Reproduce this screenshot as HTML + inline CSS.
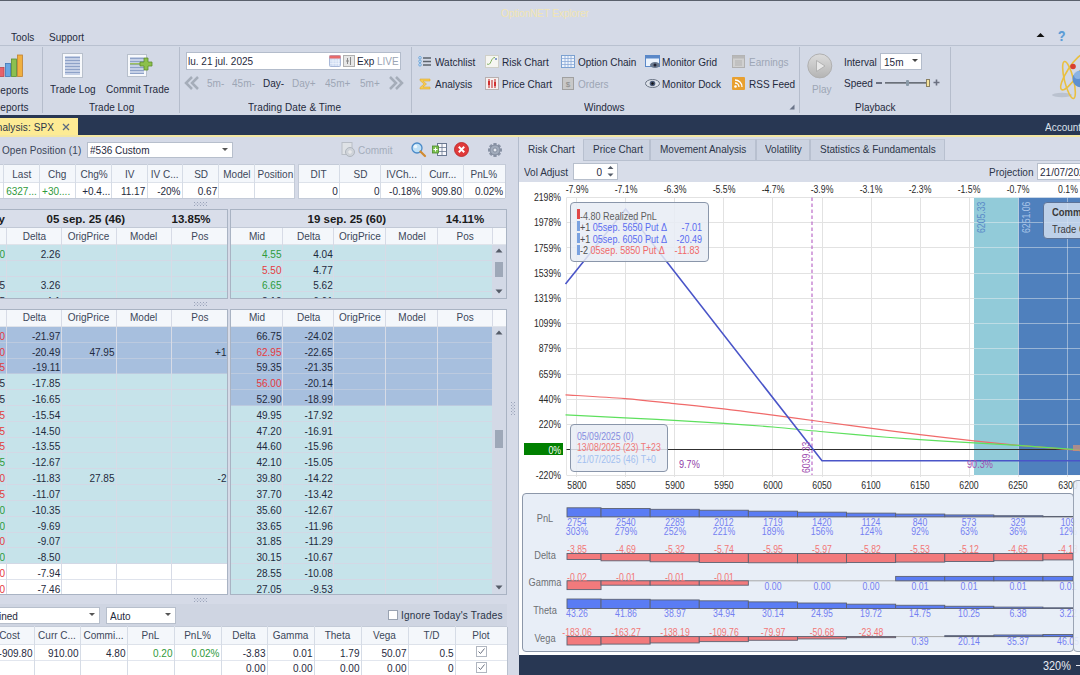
<!DOCTYPE html>
<html><head><meta charset="utf-8">
<style>
*{margin:0;padding:0;box-sizing:border-box}
html,body{width:1080px;height:675px;overflow:hidden;background:#d5dae7;font-family:"Liberation Sans",sans-serif;font-size:11.5px;color:#1f2a3d}
.a{position:absolute}
.t{position:absolute;white-space:nowrap;line-height:12px}
svg{position:absolute;overflow:visible}
</style></head><body>
<div class="a" style="left:0px;top:0px;width:1080px;height:1px;background:#5a606c;"></div>
<div class="t" style="left:501px;top:7.00px;color:#f1e5b2;transform:scaleX(0.87);transform-origin:left;letter-spacing:-0.1px;">OptionNET Explorer</div>
<div class="t" style="left:11px;top:31.00px;transform:scaleX(0.87);transform-origin:left;">Tools</div>
<div class="t" style="left:49px;top:31.00px;transform:scaleX(0.87);transform-origin:left;">Support</div>
<svg style="left:1036px;top:32px" width="9" height="6"><path d="M0.5 5 L4.5 1 L8.5 5 Z" fill="#111"/></svg>
<div class="t" style="left:1058px;top:30.00px;font-size:14px;color:#5b9bd5;font-weight:bold;transform:scaleX(0.87);transform-origin:left;text-shadow:0 0 1px #9cc3ea;">?</div>
<div class="a" style="left:0px;top:45px;width:1080px;height:1px;background:#b9c1d0;"></div>
<div class="a" style="left:0px;top:46px;width:1080px;height:69px;background:#d3d9e6;"></div>
<div class="a" style="left:42px;top:47px;width:1px;height:66px;background:#b5bdcc;"></div>
<div class="a" style="left:179px;top:47px;width:1px;height:66px;background:#b5bdcc;"></div>
<div class="a" style="left:411px;top:47px;width:1px;height:66px;background:#b5bdcc;"></div>
<div class="a" style="left:799px;top:47px;width:1px;height:66px;background:#b5bdcc;"></div>
<div class="a" style="left:950px;top:47px;width:1px;height:66px;background:#b5bdcc;"></div>
<svg style="left:0;top:54px" width="24" height="24"><rect x="-1" y="13.5" width="5" height="9" fill="#e8626a" stroke="#b8484e" stroke-width="0.8"/><rect x="5.5" y="9.5" width="5" height="13" fill="#6aa6e2" stroke="#3f78b8" stroke-width="0.8"/><rect x="11.5" y="5" width="5" height="17.5" fill="#8cc050" stroke="#5c9030" stroke-width="0.8"/><rect x="17.5" y="1" width="5" height="21.5" fill="#f0b040" stroke="#c08030" stroke-width="0.8"/></svg>
<div class="t" style="left:-7.5px;top:83.50px;transform:scaleX(0.87);transform-origin:left;letter-spacing:0.1px;">Reports</div>
<div class="t" style="left:-7px;top:101.00px;transform:scaleX(0.87);transform-origin:left;letter-spacing:0.1px;">Reports</div>
<svg style="left:62px;top:53px" width="21" height="25"><rect x="0.5" y="0.5" width="20" height="24" fill="#f7f9fc" stroke="#b8c0cc"/><rect x="3" y="3" width="15" height="19" fill="#c5d0e6"/><rect x="3" y="4" width="15" height="1" fill="#8ea2c8"/><rect x="3" y="7" width="15" height="1" fill="#8ea2c8"/><rect x="3" y="10" width="15" height="1" fill="#8ea2c8"/><rect x="3" y="13" width="15" height="1" fill="#8ea2c8"/><rect x="3" y="16" width="15" height="1" fill="#8ea2c8"/><rect x="3" y="19" width="15" height="1" fill="#8ea2c8"/></svg>
<svg style="left:127px;top:54px" width="26" height="23"><rect x="0.5" y="0.5" width="19" height="22" fill="#f7f9fc" stroke="#b8c0cc"/><rect x="3" y="3" width="14" height="17" fill="#c5d0e6"/><rect x="3" y="4" width="14" height="1" fill="#8ea2c8"/><rect x="3" y="7" width="14" height="1" fill="#8ea2c8"/><rect x="3" y="10" width="14" height="1" fill="#8ea2c8"/><rect x="3" y="13" width="14" height="1" fill="#8ea2c8"/><rect x="3" y="16" width="14" height="1" fill="#8ea2c8"/><rect x="3" y="19" width="14" height="1" fill="#8ea2c8"/><rect x="3" y="9" width="12" height="1.5" fill="#9cc060"/><path d="M17 4 h4 v4 h4 v4 h-4 v4 h-4 v-4 h-4 v-4 h4 z" fill="#8cc04a" stroke="#5e8e2e" stroke-width="0.8"/></svg>
<div class="t" style="left:50px;top:83.00px;transform:scaleX(0.87);transform-origin:left;letter-spacing:0.05px;">Trade Log</div>
<div class="t" style="left:106px;top:83.00px;transform:scaleX(0.87);transform-origin:left;letter-spacing:0.05px;">Commit Trade</div>
<div class="t" style="left:89px;top:101.00px;transform:scaleX(0.87);transform-origin:left;">Trade Log</div>
<div class="a" style="left:186px;top:52px;width:215px;height:18px;background:#fff;border:1px solid #b3bccb"></div>
<div class="t" style="left:188px;top:55.00px;transform:scaleX(0.87);transform-origin:left;">lu. 21 jul. 2025</div>
<svg style="left:329px;top:55px" width="12" height="12"><rect x="0.5" y="0.5" width="11" height="11" rx="1" fill="#d0ddf2" stroke="#a8b8d8"/><rect x="0.5" y="0.5" width="11" height="3" fill="#e86a6a"/><path d="M1 6h10M1 8.5h10M4 4v7M7 4v7M9.5 4v7" stroke="#f4f8ff" stroke-width="0.6"/></svg>
<svg style="left:343px;top:55px" width="12" height="12"><rect x="0.5" y="0.5" width="11" height="11" fill="#e6e6e6" stroke="#b0b0b0"/><path d="M4.5 3v6M7.5 2v8M3 6h3" stroke="#888" stroke-width="1"/></svg>
<div class="t" style="left:357px;top:55.00px;transform:scaleX(0.87);transform-origin:left;">Exp</div>
<div class="t" style="left:377px;top:55.00px;color:#9aa4b4;transform:scaleX(0.87);transform-origin:left;">LIVE</div>
<svg style="left:185px;top:76px" width="14" height="14"><path d="M7 1 L1 7 L7 13 M13 1 L7 7 L13 13" fill="none" stroke="#a5adb9" stroke-width="2.5"/></svg>
<svg style="left:389px;top:76px" width="14" height="14"><path d="M1 1 L7 7 L1 13 M7 1 L13 7 L7 13" fill="none" stroke="#a5adb9" stroke-width="2.5"/></svg>
<div class="t" style="left:206.5px;top:77.00px;color:#9da6b5;transform:scaleX(0.87);transform-origin:left;">5m-</div>
<div class="t" style="left:231.5px;top:77.00px;color:#9da6b5;transform:scaleX(0.87);transform-origin:left;">45m-</div>
<div class="t" style="left:262.5px;top:77.00px;transform:scaleX(0.87);transform-origin:left;">Day-</div>
<div class="t" style="left:292px;top:77.00px;color:#9da6b5;transform:scaleX(0.87);transform-origin:left;">Day+</div>
<div class="t" style="left:325px;top:77.00px;color:#9da6b5;transform:scaleX(0.87);transform-origin:left;">45m+</div>
<div class="t" style="left:359.5px;top:77.00px;color:#9da6b5;transform:scaleX(0.87);transform-origin:left;">5m+</div>
<div class="t" style="left:248px;top:101.00px;transform:scaleX(0.87);transform-origin:left;letter-spacing:0.1px;">Trading Date &amp; Time</div>
<svg style="left:418px;top:56px" width="14" height="12"><circle cx="2" cy="1.8" r="1.3" fill="#d4e6f8" stroke="#5b9bd5" stroke-width="0.8"/><circle cx="2" cy="5.3" r="1.3" fill="#d4e6f8" stroke="#5b9bd5" stroke-width="0.8"/><circle cx="2" cy="8.8" r="1.3" fill="#d4e6f8" stroke="#5b9bd5" stroke-width="0.8"/><path d="M5 2h8M5 5.5h8M5 9h8" stroke="#5e646e" stroke-width="1.3"/></svg>
<div class="t" style="left:435px;top:55.50px;transform:scaleX(0.87);transform-origin:left;">Watchlist</div>
<svg style="left:419px;top:78px" width="12" height="12"><path d="M1 1 H11 V3 H4 L7.5 6 L4 9 H11 V11 H1 V9.5 L5 6 L1 2.5 Z" fill="#f6cc50" stroke="#e0a830" stroke-width="0.6"/></svg>
<div class="t" style="left:435px;top:77.50px;transform:scaleX(0.87);transform-origin:left;">Analysis</div>
<svg style="left:485px;top:55px" width="14" height="13"><rect x="0.5" y="0.5" width="13" height="12" fill="#f6f6f2" stroke="#d0d0c8"/><path d="M2 9 C4 10 5 9 6 6.5 S8 2.5 10 2.5" fill="none" stroke="#80b060" stroke-width="1"/><circle cx="11" cy="4" r="1" fill="#6080c0"/></svg>
<div class="t" style="left:502px;top:55.50px;transform:scaleX(0.87);transform-origin:left;">Risk Chart</div>
<svg style="left:485px;top:77px" width="14" height="13"><rect x="0.5" y="0.5" width="13" height="12" fill="#f6f0f0" stroke="#b8b0b0"/><path d="M4 2v9M7 3v8M10 2v9" stroke="#c02020" stroke-width="1"/><rect x="3" y="4" width="2" height="4" fill="#d03030"/><rect x="9" y="5" width="2" height="4" fill="#d03030"/></svg>
<div class="t" style="left:502px;top:77.50px;transform:scaleX(0.87);transform-origin:left;">Price Chart</div>
<svg style="left:561px;top:55px" width="14" height="13"><rect x="0.5" y="0.5" width="13" height="12" fill="#eef4fc" stroke="#7aa0d0"/><path d="M0.5 3.5h13M0.5 6.5h13M0.5 9.5h13M4 0.5v12M7 0.5v12M10 0.5v12" stroke="#8aaad8" stroke-width="0.8"/></svg>
<div class="t" style="left:578px;top:55.50px;transform:scaleX(0.87);transform-origin:left;">Option Chain</div>
<svg style="left:562px;top:77px" width="12" height="13"><rect x="0.5" y="0.5" width="11" height="12" fill="#c8c8c8" stroke="#a0a0a0"/><text x="6" y="10" font-size="8" text-anchor="middle" fill="#888" font-family="Liberation Sans">$</text></svg>
<div class="t" style="left:578px;top:77.50px;color:#9da6b5;transform:scaleX(0.87);transform-origin:left;">Orders</div>
<svg style="left:645px;top:55px" width="16" height="14"><rect x="0.5" y="0.5" width="14" height="11" fill="#eaf2fc" stroke="#5a88c8"/><rect x="0.5" y="0.5" width="14" height="3" fill="#5a88c8"/><ellipse cx="10" cy="10" rx="5" ry="3" fill="#6a7a90"/><circle cx="10" cy="10" r="1.5" fill="#223"/></svg>
<div class="t" style="left:661.5px;top:55.50px;transform:scaleX(0.87);transform-origin:left;">Monitor Grid</div>
<svg style="left:645px;top:78px" width="15" height="11"><ellipse cx="7.5" cy="5.5" rx="7" ry="4" fill="#dde2ea" stroke="#6a7484"/><circle cx="7.5" cy="5.5" r="2.8" fill="#4a5a78"/><circle cx="7.5" cy="5.5" r="1.2" fill="#111"/></svg>
<div class="t" style="left:661.5px;top:77.50px;transform:scaleX(0.87);transform-origin:left;">Monitor Dock</div>
<svg style="left:732px;top:55px" width="13" height="13"><rect x="0.5" y="0.5" width="12" height="12" fill="#d0d0d0" stroke="#b0b0b0"/><rect x="0.5" y="0.5" width="12" height="3" fill="#b8b8b8"/><path d="M3 6h7M3 8h7M3 10h7" stroke="#aaa" stroke-width="0.8"/></svg>
<div class="t" style="left:748.5px;top:55.50px;color:#9da6b5;transform:scaleX(0.87);transform-origin:left;">Earnings</div>
<svg style="left:732px;top:77px" width="13" height="13"><rect x="0" y="0" width="13" height="13" rx="1" fill="#e8a030"/><circle cx="3.5" cy="9.5" r="1.3" fill="#fff"/><path d="M3 6 a4 4 0 0 1 4 4 M3 3 a7 7 0 0 1 7 7" fill="none" stroke="#fff" stroke-width="1.3"/></svg>
<div class="t" style="left:748.5px;top:77.50px;transform:scaleX(0.87);transform-origin:left;">RSS Feed</div>
<div class="t" style="left:584px;top:101.00px;transform:scaleX(0.87);transform-origin:left;">Windows</div>
<svg style="left:789px;top:104px" width="6" height="6"><path d="M5.5 0.5 V5.5 H0.5 Z" fill="#6a7488"/></svg>
<svg style="left:807px;top:53px" width="26" height="26"><defs><linearGradient id="pg" x1="0" y1="0" x2="0" y2="1"><stop offset="0" stop-color="#dcdcdc"/><stop offset="1" stop-color="#b4b4b4"/></linearGradient></defs><circle cx="12.8" cy="12.9" r="12" fill="url(#pg)" stroke="#b0b0b0"/><path d="M9.5 7.5 L18 13 L9.5 18.5 Z" fill="#e8e8e8" stroke="#a8a8a8" stroke-width="0.8"/></svg>
<div class="t" style="left:811.5px;top:83.30px;color:#9da6b5;transform:scaleX(0.87);transform-origin:left;">Play</div>
<div class="t" style="left:844px;top:55.50px;transform:scaleX(0.87);transform-origin:left;">Interval</div>
<div class="a" style="left:880px;top:53px;width:42px;height:17px;background:#fff;border:1px solid #b3bccb"></div>
<div class="t" style="left:884px;top:55.50px;transform:scaleX(0.87);transform-origin:left;">15m</div>
<svg style="left:912px;top:59px" width="7" height="4"><path d="M0 0 H6 L3 3 Z" fill="#444"/></svg>
<div class="t" style="left:844px;top:77.00px;transform:scaleX(0.87);transform-origin:left;">Speed</div>
<div class="a" style="left:876px;top:82px;width:6px;height:1.5px;background:#6a7080;"></div>
<div class="a" style="left:885px;top:81.5px;width:44px;height:2px;background:#8a9098;border-top:1px solid #6a707a;"></div>
<div class="a" style="left:905.5px;top:79.5px;width:3px;height:6px;background:#8a9aa8;border-radius:1px;"></div>
<div class="a" style="left:926px;top:79px;width:4px;height:8px;background:#f3e19a;border:1px solid #8a8060;"></div>
<svg style="left:933px;top:79px" width="7" height="7"><path d="M3.5 0.5 V6.5 M0.5 3.5 H6.5" stroke="#6a7080" stroke-width="1.6"/></svg>
<div class="t" style="left:855px;top:101.00px;transform:scaleX(0.87);transform-origin:left;">Playback</div>
<svg style="left:0;top:0" width="1080" height="120"><ellipse cx="1062" cy="95" rx="10" ry="2.2" fill="#aab2c0" opacity="0.6"/><ellipse cx="1069" cy="80" rx="19" ry="4.5" transform="rotate(76 1069 80)" fill="none" stroke="#e9c040" stroke-width="1.6"/><ellipse cx="1073" cy="72" rx="21" ry="5.5" transform="rotate(-57 1073 72)" fill="none" stroke="#e9c040" stroke-width="1.6"/><circle cx="1081" cy="79" r="8.5" fill="#5d90d0"/><circle cx="1078" cy="75" r="4" fill="#a8cbf0" opacity="0.6"/><circle cx="1073" cy="66.5" r="2.8" fill="#d84030"/></svg>
<div class="a" style="left:0px;top:115px;width:1080px;height:20px;background:#283753;"></div>
<div class="a" style="left:0px;top:118px;width:78px;height:17px;background:#fdeb94;"></div>
<div class="t" style="left:-10px;top:120.50px;color:#2a3447;transform:scaleX(0.87);transform-origin:left;letter-spacing:0.1px;">Analysis: SPX</div>
<svg style="left:62px;top:123px" width="8" height="8"><path d="M1 1 L7 7 M7 1 L1 7" stroke="#5a6a80" stroke-width="1.3"/></svg>
<div class="t" style="left:1045px;top:120.50px;color:#dde2ec;transform:scaleX(0.87);transform-origin:left;">Accounts</div>
<div class="a" style="left:0px;top:135px;width:1080px;height:2px;background:#f3e6a2;"></div>
<div class="t" style="left:2px;top:144.00px;color:#3a4558;transform:scaleX(0.87);transform-origin:left;letter-spacing:0.1px;">Open Position (1)</div>
<div class="a" style="left:87px;top:142px;width:146px;height:16px;background:#fff;border:1px solid #b7bfcc"></div>
<div class="t" style="left:90px;top:144.00px;transform:scaleX(0.87);transform-origin:left;">#536 Custom</div>
<svg style="left:222px;top:148px" width="7" height="4"><path d="M0 0 H6 L3 3 Z" fill="#555"/></svg>
<svg style="left:341px;top:142px" width="14" height="15"><rect x="1" y="0.5" width="10" height="12" fill="#dfe2e6" stroke="#b9bec6"/><circle cx="9" cy="10" r="4.5" fill="#cfd3d9" stroke="#b0b6be"/><path d="M9 8v4M7 10h4" stroke="#f0f0f0" stroke-width="1"/></svg>
<div class="t" style="left:358px;top:144.00px;color:#a4adbb;transform:scaleX(0.87);transform-origin:left;">Commit</div>
<svg style="left:411px;top:142px" width="15" height="15"><circle cx="6" cy="6" r="5" fill="#bfe0f6" stroke="#4a8ac8" stroke-width="1.3"/><circle cx="4.5" cy="4.5" r="1.8" fill="#fff" opacity="0.7"/><path d="M9.5 9.5 L14 14" stroke="#d08a30" stroke-width="2.2" stroke-linecap="round"/></svg>
<svg style="left:432px;top:143px" width="15" height="13"><rect x="5.5" y="0.5" width="9" height="12" fill="#f8f8fc" stroke="#6a7890"/><path d="M10 0.5v12M5.5 4.5h9M5.5 8.5h9" stroke="#6a7890" stroke-width="0.8"/><rect x="0.5" y="3" width="6" height="7" fill="#7cc050" stroke="#4a8a2a" stroke-width="0.8"/><path d="M3.5 4.5v4M1.5 6.5h4" stroke="#fff" stroke-width="1"/></svg>
<svg style="left:454px;top:142px" width="15" height="15"><circle cx="7.5" cy="7.5" r="7" fill="#e03a3a" stroke="#b82020" stroke-width="0.8"/><path d="M4.8 4.8 L10.2 10.2 M10.2 4.8 L4.8 10.2" stroke="#fff" stroke-width="2"/></svg>
<svg style="left:488px;top:143px" width="14" height="14"><g transform="translate(7 7)"><rect x="-1.6" y="-7" width="3.2" height="3.5" fill="#8a94a6" transform="rotate(0)"/><rect x="-1.6" y="-7" width="3.2" height="3.5" fill="#8a94a6" transform="rotate(45)"/><rect x="-1.6" y="-7" width="3.2" height="3.5" fill="#8a94a6" transform="rotate(90)"/><rect x="-1.6" y="-7" width="3.2" height="3.5" fill="#8a94a6" transform="rotate(135)"/><rect x="-1.6" y="-7" width="3.2" height="3.5" fill="#8a94a6" transform="rotate(180)"/><rect x="-1.6" y="-7" width="3.2" height="3.5" fill="#8a94a6" transform="rotate(225)"/><rect x="-1.6" y="-7" width="3.2" height="3.5" fill="#8a94a6" transform="rotate(270)"/><rect x="-1.6" y="-7" width="3.2" height="3.5" fill="#8a94a6" transform="rotate(315)"/><circle r="5" fill="#a2acbc" stroke="#7a8496" stroke-width="0.8"/><circle r="2" fill="#e4e8f0" stroke="#7a8496" stroke-width="0.8"/></g></svg>
<div class="a" style="left:0px;top:164px;width:294.5px;height:18px;background:#f4f7fb;"></div>
<div class="a" style="left:0px;top:182px;width:294.5px;height:16px;background:#ffffff;"></div>
<div class="a" style="left:0px;top:164px;width:295px;height:1px;background:#c4cbd8;"></div>
<div class="a" style="left:0px;top:182px;width:295px;height:1px;background:#dde2ea;"></div>
<div class="a" style="left:0px;top:197.5px;width:295px;height:1px;background:#c4cbd8;"></div>
<div class="a" style="left:3px;top:164px;width:1px;height:34px;background:#d6dce6;"></div>
<div class="a" style="left:39px;top:164px;width:1px;height:34px;background:#d6dce6;"></div>
<div class="a" style="left:75px;top:164px;width:1px;height:34px;background:#d6dce6;"></div>
<div class="a" style="left:111px;top:164px;width:1px;height:34px;background:#d6dce6;"></div>
<div class="a" style="left:147px;top:164px;width:1px;height:34px;background:#d6dce6;"></div>
<div class="a" style="left:182px;top:164px;width:1px;height:34px;background:#d6dce6;"></div>
<div class="a" style="left:218px;top:164px;width:1px;height:34px;background:#d6dce6;"></div>
<div class="a" style="left:254px;top:164px;width:1px;height:34px;background:#d6dce6;"></div>
<div class="a" style="left:294px;top:164px;width:1px;height:34px;background:#d6dce6;"></div>
<div class="a" style="left:294px;top:164px;width:1px;height:34px;background:#c4cbd8;"></div>
<div class="t" style="left:-30px;top:167.50px;color:#3c475a;width:33.75px;text-align:center;transform:scaleX(0.87);transform-origin:center;">Mid</div>
<div class="t" style="left:-30px;top:184.50px;color:#2f9a3c;width:31.75px;text-align:center;transform:scaleX(0.87);transform-origin:center;">...</div>
<div class="t" style="left:3.75px;top:167.50px;color:#3c475a;width:35.5px;text-align:center;transform:scaleX(0.87);transform-origin:center;">Last</div>
<div class="t" style="left:3.75px;top:184.50px;color:#2f9a3c;width:33.5px;text-align:center;transform:scaleX(0.87);transform-origin:center;">6327...</div>
<div class="t" style="left:39.25px;top:167.50px;color:#3c475a;width:36.25px;text-align:center;transform:scaleX(0.87);transform-origin:center;">Chg</div>
<div class="t" style="left:39.25px;top:184.50px;color:#2f9a3c;width:34.25px;text-align:center;transform:scaleX(0.87);transform-origin:center;">+30....</div>
<div class="t" style="left:75.5px;top:167.50px;color:#3c475a;width:36.25px;text-align:center;transform:scaleX(0.87);transform-origin:center;">Chg%</div>
<div class="t" style="left:75.5px;top:184.50px;color:#1f2a3d;width:34.25px;text-align:right;transform:scaleX(0.87);transform-origin:right;">+0.4...</div>
<div class="t" style="left:111.75px;top:167.50px;color:#3c475a;width:35.25px;text-align:center;transform:scaleX(0.87);transform-origin:center;">IV</div>
<div class="t" style="left:111.75px;top:184.50px;color:#1f2a3d;width:33.25px;text-align:right;transform:scaleX(0.87);transform-origin:right;">11.17</div>
<div class="t" style="left:147px;top:167.50px;color:#3c475a;width:35.5px;text-align:center;transform:scaleX(0.87);transform-origin:center;">IV C...</div>
<div class="t" style="left:147px;top:184.50px;color:#1f2a3d;width:33.5px;text-align:right;transform:scaleX(0.87);transform-origin:right;">-20%</div>
<div class="t" style="left:182.5px;top:167.50px;color:#3c475a;width:36.25px;text-align:center;transform:scaleX(0.87);transform-origin:center;">SD</div>
<div class="t" style="left:182.5px;top:184.50px;color:#1f2a3d;width:34.25px;text-align:right;transform:scaleX(0.87);transform-origin:right;">0.67</div>
<div class="t" style="left:218.75px;top:167.50px;color:#3c475a;width:35.75px;text-align:center;transform:scaleX(0.87);transform-origin:center;">Model</div>
<div class="t" style="left:218.75px;top:184.50px;color:#1f2a3d;width:33.75px;text-align:right;transform:scaleX(0.87);transform-origin:right;"></div>
<div class="t" style="left:254.5px;top:167.50px;color:#3c475a;width:40.0px;text-align:center;transform:scaleX(0.87);transform-origin:center;">Position</div>
<div class="t" style="left:254.5px;top:184.50px;color:#1f2a3d;width:38.0px;text-align:right;transform:scaleX(0.87);transform-origin:right;"></div>
<div class="a" style="left:298px;top:164px;width:207px;height:18px;background:#f4f7fb;"></div>
<div class="a" style="left:298px;top:182px;width:207px;height:16px;background:#ffffff;"></div>
<div class="a" style="left:298px;top:164px;width:207px;height:1px;background:#c4cbd8;"></div>
<div class="a" style="left:298px;top:182px;width:207px;height:1px;background:#dde2ea;"></div>
<div class="a" style="left:298px;top:197.5px;width:207px;height:1px;background:#c4cbd8;"></div>
<div class="a" style="left:298px;top:164px;width:1px;height:34px;background:#d6dce6;"></div>
<div class="a" style="left:339px;top:164px;width:1px;height:34px;background:#d6dce6;"></div>
<div class="a" style="left:380px;top:164px;width:1px;height:34px;background:#d6dce6;"></div>
<div class="a" style="left:421px;top:164px;width:1px;height:34px;background:#d6dce6;"></div>
<div class="a" style="left:463px;top:164px;width:1px;height:34px;background:#d6dce6;"></div>
<div class="a" style="left:505px;top:164px;width:1px;height:34px;background:#d6dce6;"></div>
<div class="a" style="left:298px;top:164px;width:1px;height:34px;background:#c4cbd8;"></div>
<div class="a" style="left:505px;top:164px;width:1px;height:34px;background:#c4cbd8;"></div>
<div class="t" style="left:298.25px;top:167.50px;color:#3c475a;width:41.25px;text-align:center;transform:scaleX(0.87);transform-origin:center;">DIT</div>
<div class="t" style="left:298.25px;top:184.50px;width:39.75px;text-align:right;transform:scaleX(0.87);transform-origin:right;">0</div>
<div class="t" style="left:339.5px;top:167.50px;color:#3c475a;width:41.0px;text-align:center;transform:scaleX(0.87);transform-origin:center;">SD</div>
<div class="t" style="left:339.5px;top:184.50px;width:39.5px;text-align:right;transform:scaleX(0.87);transform-origin:right;">0</div>
<div class="t" style="left:380.5px;top:167.50px;color:#3c475a;width:41.25px;text-align:center;transform:scaleX(0.87);transform-origin:center;">IVCh...</div>
<div class="t" style="left:380.5px;top:184.50px;width:39.75px;text-align:right;transform:scaleX(0.87);transform-origin:right;">-0.18%</div>
<div class="t" style="left:421.75px;top:167.50px;color:#3c475a;width:41.5px;text-align:center;transform:scaleX(0.87);transform-origin:center;">Curr...</div>
<div class="t" style="left:421.75px;top:184.50px;width:40.0px;text-align:right;transform:scaleX(0.87);transform-origin:right;">909.80</div>
<div class="t" style="left:463.25px;top:167.50px;color:#3c475a;width:41.75px;text-align:center;transform:scaleX(0.87);transform-origin:center;">PnL%</div>
<div class="t" style="left:463.25px;top:184.50px;width:40.25px;text-align:right;transform:scaleX(0.87);transform-origin:right;">0.02%</div>
<svg style="left:194px;top:202px" width="14" height="5"><rect x="0.0" y="0" width="1" height="1" fill="#9ba4ba"/><rect x="0.0" y="3" width="1" height="1" fill="#9ba4ba"/><rect x="1.5" y="1.5" width="1" height="1" fill="#9ba4ba"/><rect x="3.0" y="0" width="1" height="1" fill="#9ba4ba"/><rect x="3.0" y="3" width="1" height="1" fill="#9ba4ba"/><rect x="4.5" y="1.5" width="1" height="1" fill="#9ba4ba"/><rect x="6.0" y="0" width="1" height="1" fill="#9ba4ba"/><rect x="6.0" y="3" width="1" height="1" fill="#9ba4ba"/><rect x="7.5" y="1.5" width="1" height="1" fill="#9ba4ba"/><rect x="9.0" y="0" width="1" height="1" fill="#9ba4ba"/><rect x="9.0" y="3" width="1" height="1" fill="#9ba4ba"/><rect x="10.5" y="1.5" width="1" height="1" fill="#9ba4ba"/><rect x="12.0" y="0" width="1" height="1" fill="#9ba4ba"/><rect x="12.0" y="3" width="1" height="1" fill="#9ba4ba"/></svg>
<div class="a" style="left:-2px;top:209px;width:230px;height:90px;background:#ffffff;border:1px solid #a9b3c3;"></div>
<div class="a" style="left:230px;top:209px;width:277px;height:90px;background:#ffffff;border:1px solid #a9b3c3;"></div>
<div class="a" style="left:0px;top:210px;width:227px;height:18px;background:#d9deea;"></div>
<div class="a" style="left:231px;top:210px;width:275px;height:18px;background:#d9deea;"></div>
<div class="a" style="left:0px;top:227px;width:227px;height:1px;background:#c2c9d6;"></div>
<div class="a" style="left:231px;top:227px;width:275px;height:1px;background:#c2c9d6;"></div>
<div class="a" style="left:0px;top:228px;width:227px;height:17px;background:#f4f7fb;"></div>
<div class="a" style="left:231px;top:228px;width:261px;height:17px;background:#f4f7fb;"></div>
<div class="a" style="left:492px;top:228px;width:14px;height:17px;background:#f7f9fc;border-left:1px solid #d7dbe6;"></div>
<div class="a" style="left:0px;top:244px;width:227px;height:1px;background:#dfe3ea;"></div>
<div class="a" style="left:231px;top:244px;width:275px;height:1px;background:#dfe3ea;"></div>
<div class="t" style="left:-22px;top:212.50px;color:#1a1a1a;width:27px;text-align:right;font-weight:bold;">Day</div>
<div class="t" style="left:46.5px;top:212.50px;color:#1a1a1a;font-weight:bold;">05 sep. 25 (46)</div>
<div class="t" style="left:171.5px;top:212.50px;color:#1a1a1a;font-weight:bold;">13.85%</div>
<div class="t" style="left:307.5px;top:212.50px;color:#1a1a1a;font-weight:bold;">19 sep. 25 (60)</div>
<div class="t" style="left:445.75px;top:212.50px;color:#1a1a1a;font-weight:bold;">14.11%</div>
<div class="a" style="left:0px;top:245px;width:227px;height:16px;background:#c6e3ea;"></div>
<div class="a" style="left:231px;top:245px;width:261px;height:16px;background:#c6e3ea;"></div>
<div class="a" style="left:0px;top:260px;width:227px;height:1px;background:#d3d8e5;"></div>
<div class="a" style="left:231px;top:260px;width:261px;height:1px;background:#d3d8e5;"></div>
<div class="a" style="left:0px;top:261px;width:227px;height:16px;background:#c6e3ea;"></div>
<div class="a" style="left:231px;top:261px;width:261px;height:16px;background:#c6e3ea;"></div>
<div class="a" style="left:0px;top:276px;width:227px;height:1px;background:#d3d8e5;"></div>
<div class="a" style="left:231px;top:276px;width:261px;height:1px;background:#d3d8e5;"></div>
<div class="a" style="left:0px;top:277px;width:227px;height:15px;background:#c6e3ea;"></div>
<div class="a" style="left:231px;top:277px;width:261px;height:15px;background:#c6e3ea;"></div>
<div class="a" style="left:0px;top:291px;width:227px;height:1px;background:#d3d8e5;"></div>
<div class="a" style="left:231px;top:291px;width:261px;height:1px;background:#d3d8e5;"></div>
<div class="a" style="left:0px;top:292px;width:227px;height:6px;background:#c6e3ea;"></div>
<div class="a" style="left:231px;top:292px;width:261px;height:6px;background:#c6e3ea;"></div>
<div class="a" style="left:0px;top:307px;width:227px;height:1px;background:#d3d8e5;"></div>
<div class="a" style="left:231px;top:307px;width:261px;height:1px;background:#d3d8e5;"></div>
<div class="a" style="left:6px;top:228px;width:1px;height:70px;background:#d7dbe6;"></div>
<div class="a" style="left:61px;top:228px;width:1px;height:70px;background:#d7dbe6;"></div>
<div class="a" style="left:116px;top:228px;width:1px;height:70px;background:#d7dbe6;"></div>
<div class="a" style="left:171px;top:228px;width:1px;height:70px;background:#d7dbe6;"></div>
<div class="a" style="left:282px;top:228px;width:1px;height:70px;background:#d7dbe6;"></div>
<div class="a" style="left:333px;top:228px;width:1px;height:70px;background:#d7dbe6;"></div>
<div class="a" style="left:385px;top:228px;width:1px;height:70px;background:#d7dbe6;"></div>
<div class="a" style="left:437px;top:228px;width:1px;height:70px;background:#d7dbe6;"></div>
<div class="t" style="left:-60px;top:229.80px;color:#3c475a;width:66.5px;text-align:center;transform:scaleX(0.87);transform-origin:center;">Mid</div>
<div class="t" style="left:6.5px;top:229.80px;color:#3c475a;width:54.75px;text-align:center;transform:scaleX(0.87);transform-origin:center;">Delta</div>
<div class="t" style="left:61.25px;top:229.80px;color:#3c475a;width:55.0px;text-align:center;transform:scaleX(0.87);transform-origin:center;">OrigPrice</div>
<div class="t" style="left:116.25px;top:229.80px;color:#3c475a;width:55.25px;text-align:center;transform:scaleX(0.87);transform-origin:center;">Model</div>
<div class="t" style="left:171.5px;top:229.80px;color:#3c475a;width:56.0px;text-align:center;transform:scaleX(0.87);transform-origin:center;">Pos</div>
<div class="t" style="left:230.5px;top:229.80px;color:#3c475a;width:52.0px;text-align:center;transform:scaleX(0.87);transform-origin:center;">Mid</div>
<div class="t" style="left:282.5px;top:229.80px;color:#3c475a;width:51.25px;text-align:center;transform:scaleX(0.87);transform-origin:center;">Delta</div>
<div class="t" style="left:333.75px;top:229.80px;color:#3c475a;width:51.75px;text-align:center;transform:scaleX(0.87);transform-origin:center;">OrigPrice</div>
<div class="t" style="left:385.5px;top:229.80px;color:#3c475a;width:52.0px;text-align:center;transform:scaleX(0.87);transform-origin:center;">Model</div>
<div class="t" style="left:437.5px;top:229.80px;color:#3c475a;width:54.5px;text-align:center;transform:scaleX(0.87);transform-origin:center;">Pos</div>
<div class="t" style="left:-60px;top:247.80px;color:#2f9a3c;width:65.0px;text-align:right;transform:scaleX(0.87);transform-origin:right;">0</div>
<div class="t" style="left:6.5px;top:247.80px;color:#1f2a3d;width:53.25px;text-align:right;transform:scaleX(0.87);transform-origin:right;">2.26</div>
<div class="t" style="left:-60px;top:279.42px;color:#1f2a3d;width:65.0px;text-align:right;transform:scaleX(0.87);transform-origin:right;">5</div>
<div class="t" style="left:6.5px;top:279.42px;color:#1f2a3d;width:53.25px;text-align:right;transform:scaleX(0.87);transform-origin:right;">3.26</div>
<div class="t" style="left:-60px;top:295.23px;color:#1f2a3d;width:65.0px;text-align:right;transform:scaleX(0.87);transform-origin:right;">5</div>
<div class="t" style="left:6.5px;top:295.23px;color:#1f2a3d;width:53.25px;text-align:right;transform:scaleX(0.87);transform-origin:right;">4.1</div>
<div class="t" style="left:230.5px;top:247.80px;color:#2f9a3c;width:50.5px;text-align:right;transform:scaleX(0.87);transform-origin:right;">4.55</div>
<div class="t" style="left:282.5px;top:247.80px;color:#1f2a3d;width:49.75px;text-align:right;transform:scaleX(0.87);transform-origin:right;">4.04</div>
<div class="t" style="left:230.5px;top:263.61px;color:#e53a40;width:50.5px;text-align:right;transform:scaleX(0.87);transform-origin:right;">5.50</div>
<div class="t" style="left:282.5px;top:263.61px;color:#1f2a3d;width:49.75px;text-align:right;transform:scaleX(0.87);transform-origin:right;">4.77</div>
<div class="t" style="left:230.5px;top:279.42px;color:#2f9a3c;width:50.5px;text-align:right;transform:scaleX(0.87);transform-origin:right;">6.65</div>
<div class="t" style="left:282.5px;top:279.42px;color:#1f2a3d;width:49.75px;text-align:right;transform:scaleX(0.87);transform-origin:right;">5.62</div>
<div class="t" style="left:230.5px;top:295.23px;color:#1f2a3d;width:50.5px;text-align:right;transform:scaleX(0.87);transform-origin:right;">8.10</div>
<div class="t" style="left:282.5px;top:295.23px;color:#1f2a3d;width:49.75px;text-align:right;transform:scaleX(0.87);transform-origin:right;">6.61</div>
<div class="a" style="left:0px;top:299px;width:507px;height:10px;background:#d5dae7;"></div>
<div class="a" style="left:-2px;top:298px;width:230px;height:1px;background:#a9b3c3;"></div>
<div class="a" style="left:230px;top:298px;width:277px;height:1px;background:#a9b3c3;"></div>
<div class="a" style="left:492px;top:245px;width:14px;height:53px;background:#d3d9e6;"></div>
<svg style="left:495px;top:248px" width="8" height="5"><path d="M0.5 4.5 L4 0.5 L7.5 4.5 Z" fill="#555c68"/></svg>
<svg style="left:495px;top:289px" width="8" height="5"><path d="M0.5 0.5 L4 4.5 L7.5 0.5 Z" fill="#555c68"/></svg>
<div class="a" style="left:495px;top:262px;width:8px;height:15px;background:#9ea8b8;"></div>
<div class="a" style="left:-2px;top:309px;width:230px;height:286px;background:#ffffff;border:1px solid #a9b3c3;"></div>
<div class="a" style="left:230px;top:309px;width:277px;height:286px;background:#ffffff;border:1px solid #a9b3c3;"></div>
<div class="a" style="left:0px;top:310px;width:227px;height:17px;background:#f4f7fb;"></div>
<div class="a" style="left:231px;top:310px;width:261px;height:17px;background:#f4f7fb;"></div>
<div class="a" style="left:492px;top:310px;width:14px;height:17px;background:#f7f9fc;border-left:1px solid #d7dbe6;"></div>
<div class="a" style="left:0px;top:326px;width:227px;height:1px;background:#dfe3ea;"></div>
<div class="a" style="left:231px;top:326px;width:275px;height:1px;background:#dfe3ea;"></div>
<div class="a" style="left:0px;top:327px;width:227px;height:16px;background:#a7bfde;"></div>
<div class="a" style="left:231px;top:327px;width:261px;height:16px;background:#a7bfde;"></div>
<div class="a" style="left:0px;top:342px;width:227px;height:1px;background:#bccadf;"></div>
<div class="a" style="left:231px;top:342px;width:261px;height:1px;background:#bccadf;"></div>
<div class="a" style="left:0px;top:343px;width:227px;height:16px;background:#a7bfde;"></div>
<div class="a" style="left:231px;top:343px;width:261px;height:16px;background:#a7bfde;"></div>
<div class="a" style="left:0px;top:358px;width:227px;height:1px;background:#bccadf;"></div>
<div class="a" style="left:231px;top:358px;width:261px;height:1px;background:#bccadf;"></div>
<div class="a" style="left:0px;top:359px;width:227px;height:15px;background:#a7bfde;"></div>
<div class="a" style="left:231px;top:359px;width:261px;height:15px;background:#a7bfde;"></div>
<div class="a" style="left:0px;top:373px;width:227px;height:1px;background:#bccadf;"></div>
<div class="a" style="left:231px;top:373px;width:261px;height:1px;background:#bccadf;"></div>
<div class="a" style="left:0px;top:374px;width:227px;height:16px;background:#c6e3ea;"></div>
<div class="a" style="left:231px;top:374px;width:261px;height:16px;background:#a7bfde;"></div>
<div class="a" style="left:0px;top:389px;width:227px;height:1px;background:#d3d8e5;"></div>
<div class="a" style="left:231px;top:389px;width:261px;height:1px;background:#bccadf;"></div>
<div class="a" style="left:0px;top:390px;width:227px;height:16px;background:#c6e3ea;"></div>
<div class="a" style="left:231px;top:390px;width:261px;height:16px;background:#a7bfde;"></div>
<div class="a" style="left:0px;top:405px;width:227px;height:1px;background:#d3d8e5;"></div>
<div class="a" style="left:231px;top:405px;width:261px;height:1px;background:#bccadf;"></div>
<div class="a" style="left:0px;top:406px;width:227px;height:16px;background:#c6e3ea;"></div>
<div class="a" style="left:231px;top:406px;width:261px;height:16px;background:#c6e3ea;"></div>
<div class="a" style="left:0px;top:421px;width:227px;height:1px;background:#d3d8e5;"></div>
<div class="a" style="left:231px;top:421px;width:261px;height:1px;background:#d3d8e5;"></div>
<div class="a" style="left:0px;top:422px;width:227px;height:16px;background:#c6e3ea;"></div>
<div class="a" style="left:231px;top:422px;width:261px;height:16px;background:#c6e3ea;"></div>
<div class="a" style="left:0px;top:437px;width:227px;height:1px;background:#d3d8e5;"></div>
<div class="a" style="left:231px;top:437px;width:261px;height:1px;background:#d3d8e5;"></div>
<div class="a" style="left:0px;top:438px;width:227px;height:15px;background:#c6e3ea;"></div>
<div class="a" style="left:231px;top:438px;width:261px;height:15px;background:#c6e3ea;"></div>
<div class="a" style="left:0px;top:452px;width:227px;height:1px;background:#d3d8e5;"></div>
<div class="a" style="left:231px;top:452px;width:261px;height:1px;background:#d3d8e5;"></div>
<div class="a" style="left:0px;top:453px;width:227px;height:16px;background:#c6e3ea;"></div>
<div class="a" style="left:231px;top:453px;width:261px;height:16px;background:#c6e3ea;"></div>
<div class="a" style="left:0px;top:468px;width:227px;height:1px;background:#d3d8e5;"></div>
<div class="a" style="left:231px;top:468px;width:261px;height:1px;background:#d3d8e5;"></div>
<div class="a" style="left:0px;top:469px;width:227px;height:16px;background:#c6e3ea;"></div>
<div class="a" style="left:231px;top:469px;width:261px;height:16px;background:#c6e3ea;"></div>
<div class="a" style="left:0px;top:484px;width:227px;height:1px;background:#d3d8e5;"></div>
<div class="a" style="left:231px;top:484px;width:261px;height:1px;background:#d3d8e5;"></div>
<div class="a" style="left:0px;top:485px;width:227px;height:16px;background:#c6e3ea;"></div>
<div class="a" style="left:231px;top:485px;width:261px;height:16px;background:#c6e3ea;"></div>
<div class="a" style="left:0px;top:500px;width:227px;height:1px;background:#d3d8e5;"></div>
<div class="a" style="left:231px;top:500px;width:261px;height:1px;background:#d3d8e5;"></div>
<div class="a" style="left:0px;top:501px;width:227px;height:16px;background:#c6e3ea;"></div>
<div class="a" style="left:231px;top:501px;width:261px;height:16px;background:#c6e3ea;"></div>
<div class="a" style="left:0px;top:516px;width:227px;height:1px;background:#d3d8e5;"></div>
<div class="a" style="left:231px;top:516px;width:261px;height:1px;background:#d3d8e5;"></div>
<div class="a" style="left:0px;top:517px;width:227px;height:16px;background:#c6e3ea;"></div>
<div class="a" style="left:231px;top:517px;width:261px;height:16px;background:#c6e3ea;"></div>
<div class="a" style="left:0px;top:532px;width:227px;height:1px;background:#d3d8e5;"></div>
<div class="a" style="left:231px;top:532px;width:261px;height:1px;background:#d3d8e5;"></div>
<div class="a" style="left:0px;top:533px;width:227px;height:15px;background:#c6e3ea;"></div>
<div class="a" style="left:231px;top:533px;width:261px;height:15px;background:#c6e3ea;"></div>
<div class="a" style="left:0px;top:547px;width:227px;height:1px;background:#d3d8e5;"></div>
<div class="a" style="left:231px;top:547px;width:261px;height:1px;background:#d3d8e5;"></div>
<div class="a" style="left:0px;top:548px;width:227px;height:16px;background:#c6e3ea;"></div>
<div class="a" style="left:231px;top:548px;width:261px;height:16px;background:#c6e3ea;"></div>
<div class="a" style="left:0px;top:563px;width:227px;height:1px;background:#d3d8e5;"></div>
<div class="a" style="left:231px;top:563px;width:261px;height:1px;background:#d3d8e5;"></div>
<div class="a" style="left:0px;top:564px;width:227px;height:16px;background:#ffffff;"></div>
<div class="a" style="left:231px;top:564px;width:261px;height:16px;background:#c6e3ea;"></div>
<div class="a" style="left:0px;top:579px;width:227px;height:1px;background:#dfe3ec;"></div>
<div class="a" style="left:231px;top:579px;width:261px;height:1px;background:#d3d8e5;"></div>
<div class="a" style="left:0px;top:580px;width:227px;height:14px;background:#ffffff;"></div>
<div class="a" style="left:231px;top:580px;width:261px;height:14px;background:#c6e3ea;"></div>
<div class="a" style="left:0px;top:595px;width:227px;height:1px;background:#dfe3ec;"></div>
<div class="a" style="left:231px;top:595px;width:261px;height:1px;background:#d3d8e5;"></div>
<div class="a" style="left:6px;top:310px;width:1px;height:284px;background:#d7dbe6;"></div>
<div class="a" style="left:61px;top:310px;width:1px;height:284px;background:#d7dbe6;"></div>
<div class="a" style="left:116px;top:310px;width:1px;height:284px;background:#d7dbe6;"></div>
<div class="a" style="left:171px;top:310px;width:1px;height:284px;background:#d7dbe6;"></div>
<div class="a" style="left:282px;top:310px;width:1px;height:284px;background:#d7dbe6;"></div>
<div class="a" style="left:333px;top:310px;width:1px;height:284px;background:#d7dbe6;"></div>
<div class="a" style="left:385px;top:310px;width:1px;height:284px;background:#d7dbe6;"></div>
<div class="a" style="left:437px;top:310px;width:1px;height:284px;background:#d7dbe6;"></div>
<div class="t" style="left:-60px;top:311.30px;color:#3c475a;width:66.5px;text-align:center;transform:scaleX(0.87);transform-origin:center;">Mid</div>
<div class="t" style="left:6.5px;top:311.30px;color:#3c475a;width:54.75px;text-align:center;transform:scaleX(0.87);transform-origin:center;">Delta</div>
<div class="t" style="left:61.25px;top:311.30px;color:#3c475a;width:55.0px;text-align:center;transform:scaleX(0.87);transform-origin:center;">OrigPrice</div>
<div class="t" style="left:116.25px;top:311.30px;color:#3c475a;width:55.25px;text-align:center;transform:scaleX(0.87);transform-origin:center;">Model</div>
<div class="t" style="left:171.5px;top:311.30px;color:#3c475a;width:56.0px;text-align:center;transform:scaleX(0.87);transform-origin:center;">Pos</div>
<div class="t" style="left:230.5px;top:311.30px;color:#3c475a;width:52.0px;text-align:center;transform:scaleX(0.87);transform-origin:center;">Mid</div>
<div class="t" style="left:282.5px;top:311.30px;color:#3c475a;width:51.25px;text-align:center;transform:scaleX(0.87);transform-origin:center;">Delta</div>
<div class="t" style="left:333.75px;top:311.30px;color:#3c475a;width:51.75px;text-align:center;transform:scaleX(0.87);transform-origin:center;">OrigPrice</div>
<div class="t" style="left:385.5px;top:311.30px;color:#3c475a;width:52.0px;text-align:center;transform:scaleX(0.87);transform-origin:center;">Model</div>
<div class="t" style="left:437.5px;top:311.30px;color:#3c475a;width:54.5px;text-align:center;transform:scaleX(0.87);transform-origin:center;">Pos</div>
<div class="t" style="left:-60px;top:329.80px;color:#e53a40;width:65.0px;text-align:right;transform:scaleX(0.87);transform-origin:right;">0</div>
<div class="t" style="left:6.5px;top:329.80px;color:#1f2a3d;width:53.25px;text-align:right;transform:scaleX(0.87);transform-origin:right;">-21.97</div>
<div class="t" style="left:-60px;top:345.61px;color:#e53a40;width:65.0px;text-align:right;transform:scaleX(0.87);transform-origin:right;">0</div>
<div class="t" style="left:6.5px;top:345.61px;color:#1f2a3d;width:53.25px;text-align:right;transform:scaleX(0.87);transform-origin:right;">-20.49</div>
<div class="t" style="left:61.25px;top:345.61px;color:#1f2a3d;width:53.5px;text-align:right;transform:scaleX(0.87);transform-origin:right;">47.95</div>
<div class="t" style="left:171.5px;top:345.61px;color:#1f2a3d;width:54.5px;text-align:right;transform:scaleX(0.87);transform-origin:right;">+1</div>
<div class="t" style="left:-60px;top:361.42px;color:#e53a40;width:65.0px;text-align:right;transform:scaleX(0.87);transform-origin:right;">5</div>
<div class="t" style="left:6.5px;top:361.42px;color:#1f2a3d;width:53.25px;text-align:right;transform:scaleX(0.87);transform-origin:right;">-19.11</div>
<div class="t" style="left:-60px;top:377.23px;color:#1f2a3d;width:65.0px;text-align:right;transform:scaleX(0.87);transform-origin:right;">5</div>
<div class="t" style="left:6.5px;top:377.23px;color:#1f2a3d;width:53.25px;text-align:right;transform:scaleX(0.87);transform-origin:right;">-17.85</div>
<div class="t" style="left:-60px;top:393.04px;color:#1f2a3d;width:65.0px;text-align:right;transform:scaleX(0.87);transform-origin:right;">5</div>
<div class="t" style="left:6.5px;top:393.04px;color:#1f2a3d;width:53.25px;text-align:right;transform:scaleX(0.87);transform-origin:right;">-16.65</div>
<div class="t" style="left:-60px;top:408.85px;color:#e53a40;width:65.0px;text-align:right;transform:scaleX(0.87);transform-origin:right;">5</div>
<div class="t" style="left:6.5px;top:408.85px;color:#1f2a3d;width:53.25px;text-align:right;transform:scaleX(0.87);transform-origin:right;">-15.54</div>
<div class="t" style="left:-60px;top:424.66px;color:#e53a40;width:65.0px;text-align:right;transform:scaleX(0.87);transform-origin:right;">5</div>
<div class="t" style="left:6.5px;top:424.66px;color:#1f2a3d;width:53.25px;text-align:right;transform:scaleX(0.87);transform-origin:right;">-14.50</div>
<div class="t" style="left:-60px;top:440.47px;color:#e53a40;width:65.0px;text-align:right;transform:scaleX(0.87);transform-origin:right;">5</div>
<div class="t" style="left:6.5px;top:440.47px;color:#1f2a3d;width:53.25px;text-align:right;transform:scaleX(0.87);transform-origin:right;">-13.55</div>
<div class="t" style="left:-60px;top:456.28px;color:#2f9a3c;width:65.0px;text-align:right;transform:scaleX(0.87);transform-origin:right;">5</div>
<div class="t" style="left:6.5px;top:456.28px;color:#1f2a3d;width:53.25px;text-align:right;transform:scaleX(0.87);transform-origin:right;">-12.67</div>
<div class="t" style="left:-60px;top:472.09px;color:#e53a40;width:65.0px;text-align:right;transform:scaleX(0.87);transform-origin:right;">0</div>
<div class="t" style="left:6.5px;top:472.09px;color:#1f2a3d;width:53.25px;text-align:right;transform:scaleX(0.87);transform-origin:right;">-11.83</div>
<div class="t" style="left:61.25px;top:472.09px;color:#1f2a3d;width:53.5px;text-align:right;transform:scaleX(0.87);transform-origin:right;">27.85</div>
<div class="t" style="left:171.5px;top:472.09px;color:#1f2a3d;width:54.5px;text-align:right;transform:scaleX(0.87);transform-origin:right;">-2</div>
<div class="t" style="left:-60px;top:487.90px;color:#e53a40;width:65.0px;text-align:right;transform:scaleX(0.87);transform-origin:right;">5</div>
<div class="t" style="left:6.5px;top:487.90px;color:#1f2a3d;width:53.25px;text-align:right;transform:scaleX(0.87);transform-origin:right;">-11.07</div>
<div class="t" style="left:-60px;top:503.71px;color:#2f9a3c;width:65.0px;text-align:right;transform:scaleX(0.87);transform-origin:right;">0</div>
<div class="t" style="left:6.5px;top:503.71px;color:#1f2a3d;width:53.25px;text-align:right;transform:scaleX(0.87);transform-origin:right;">-10.35</div>
<div class="t" style="left:-60px;top:519.52px;color:#2f9a3c;width:65.0px;text-align:right;transform:scaleX(0.87);transform-origin:right;">0</div>
<div class="t" style="left:6.5px;top:519.52px;color:#1f2a3d;width:53.25px;text-align:right;transform:scaleX(0.87);transform-origin:right;">-9.69</div>
<div class="t" style="left:-60px;top:535.33px;color:#e53a40;width:65.0px;text-align:right;transform:scaleX(0.87);transform-origin:right;">0</div>
<div class="t" style="left:6.5px;top:535.33px;color:#1f2a3d;width:53.25px;text-align:right;transform:scaleX(0.87);transform-origin:right;">-9.07</div>
<div class="t" style="left:-60px;top:551.14px;color:#2f9a3c;width:65.0px;text-align:right;transform:scaleX(0.87);transform-origin:right;">0</div>
<div class="t" style="left:6.5px;top:551.14px;color:#1f2a3d;width:53.25px;text-align:right;transform:scaleX(0.87);transform-origin:right;">-8.50</div>
<div class="t" style="left:-60px;top:566.95px;color:#e53a40;width:65.0px;text-align:right;transform:scaleX(0.87);transform-origin:right;">0</div>
<div class="t" style="left:6.5px;top:566.95px;color:#1f2a3d;width:53.25px;text-align:right;transform:scaleX(0.87);transform-origin:right;">-7.94</div>
<div class="t" style="left:-60px;top:582.76px;color:#e53a40;width:65.0px;text-align:right;transform:scaleX(0.87);transform-origin:right;">0</div>
<div class="t" style="left:6.5px;top:582.76px;color:#1f2a3d;width:53.25px;text-align:right;transform:scaleX(0.87);transform-origin:right;">-7.46</div>
<div class="t" style="left:230.5px;top:329.80px;color:#1f2a3d;width:50.5px;text-align:right;transform:scaleX(0.87);transform-origin:right;">66.75</div>
<div class="t" style="left:282.5px;top:329.80px;color:#1f2a3d;width:49.75px;text-align:right;transform:scaleX(0.87);transform-origin:right;">-24.02</div>
<div class="t" style="left:230.5px;top:345.61px;color:#e53a40;width:50.5px;text-align:right;transform:scaleX(0.87);transform-origin:right;">62.95</div>
<div class="t" style="left:282.5px;top:345.61px;color:#1f2a3d;width:49.75px;text-align:right;transform:scaleX(0.87);transform-origin:right;">-22.65</div>
<div class="t" style="left:230.5px;top:361.42px;color:#1f2a3d;width:50.5px;text-align:right;transform:scaleX(0.87);transform-origin:right;">59.35</div>
<div class="t" style="left:282.5px;top:361.42px;color:#1f2a3d;width:49.75px;text-align:right;transform:scaleX(0.87);transform-origin:right;">-21.35</div>
<div class="t" style="left:230.5px;top:377.23px;color:#e53a40;width:50.5px;text-align:right;transform:scaleX(0.87);transform-origin:right;">56.00</div>
<div class="t" style="left:282.5px;top:377.23px;color:#1f2a3d;width:49.75px;text-align:right;transform:scaleX(0.87);transform-origin:right;">-20.14</div>
<div class="t" style="left:230.5px;top:393.04px;color:#1f2a3d;width:50.5px;text-align:right;transform:scaleX(0.87);transform-origin:right;">52.90</div>
<div class="t" style="left:282.5px;top:393.04px;color:#1f2a3d;width:49.75px;text-align:right;transform:scaleX(0.87);transform-origin:right;">-18.99</div>
<div class="t" style="left:230.5px;top:408.85px;color:#1f2a3d;width:50.5px;text-align:right;transform:scaleX(0.87);transform-origin:right;">49.95</div>
<div class="t" style="left:282.5px;top:408.85px;color:#1f2a3d;width:49.75px;text-align:right;transform:scaleX(0.87);transform-origin:right;">-17.92</div>
<div class="t" style="left:230.5px;top:424.66px;color:#1f2a3d;width:50.5px;text-align:right;transform:scaleX(0.87);transform-origin:right;">47.20</div>
<div class="t" style="left:282.5px;top:424.66px;color:#1f2a3d;width:49.75px;text-align:right;transform:scaleX(0.87);transform-origin:right;">-16.91</div>
<div class="t" style="left:230.5px;top:440.47px;color:#1f2a3d;width:50.5px;text-align:right;transform:scaleX(0.87);transform-origin:right;">44.60</div>
<div class="t" style="left:282.5px;top:440.47px;color:#1f2a3d;width:49.75px;text-align:right;transform:scaleX(0.87);transform-origin:right;">-15.96</div>
<div class="t" style="left:230.5px;top:456.28px;color:#1f2a3d;width:50.5px;text-align:right;transform:scaleX(0.87);transform-origin:right;">42.10</div>
<div class="t" style="left:282.5px;top:456.28px;color:#1f2a3d;width:49.75px;text-align:right;transform:scaleX(0.87);transform-origin:right;">-15.05</div>
<div class="t" style="left:230.5px;top:472.09px;color:#1f2a3d;width:50.5px;text-align:right;transform:scaleX(0.87);transform-origin:right;">39.80</div>
<div class="t" style="left:282.5px;top:472.09px;color:#1f2a3d;width:49.75px;text-align:right;transform:scaleX(0.87);transform-origin:right;">-14.22</div>
<div class="t" style="left:230.5px;top:487.90px;color:#1f2a3d;width:50.5px;text-align:right;transform:scaleX(0.87);transform-origin:right;">37.70</div>
<div class="t" style="left:282.5px;top:487.90px;color:#1f2a3d;width:49.75px;text-align:right;transform:scaleX(0.87);transform-origin:right;">-13.42</div>
<div class="t" style="left:230.5px;top:503.71px;color:#1f2a3d;width:50.5px;text-align:right;transform:scaleX(0.87);transform-origin:right;">35.60</div>
<div class="t" style="left:282.5px;top:503.71px;color:#1f2a3d;width:49.75px;text-align:right;transform:scaleX(0.87);transform-origin:right;">-12.67</div>
<div class="t" style="left:230.5px;top:519.52px;color:#1f2a3d;width:50.5px;text-align:right;transform:scaleX(0.87);transform-origin:right;">33.65</div>
<div class="t" style="left:282.5px;top:519.52px;color:#1f2a3d;width:49.75px;text-align:right;transform:scaleX(0.87);transform-origin:right;">-11.96</div>
<div class="t" style="left:230.5px;top:535.33px;color:#1f2a3d;width:50.5px;text-align:right;transform:scaleX(0.87);transform-origin:right;">31.85</div>
<div class="t" style="left:282.5px;top:535.33px;color:#1f2a3d;width:49.75px;text-align:right;transform:scaleX(0.87);transform-origin:right;">-11.29</div>
<div class="t" style="left:230.5px;top:551.14px;color:#1f2a3d;width:50.5px;text-align:right;transform:scaleX(0.87);transform-origin:right;">30.15</div>
<div class="t" style="left:282.5px;top:551.14px;color:#1f2a3d;width:49.75px;text-align:right;transform:scaleX(0.87);transform-origin:right;">-10.67</div>
<div class="t" style="left:230.5px;top:566.95px;color:#1f2a3d;width:50.5px;text-align:right;transform:scaleX(0.87);transform-origin:right;">28.55</div>
<div class="t" style="left:282.5px;top:566.95px;color:#1f2a3d;width:49.75px;text-align:right;transform:scaleX(0.87);transform-origin:right;">-10.08</div>
<div class="t" style="left:230.5px;top:582.76px;color:#1f2a3d;width:50.5px;text-align:right;transform:scaleX(0.87);transform-origin:right;">27.05</div>
<div class="t" style="left:282.5px;top:582.76px;color:#1f2a3d;width:49.75px;text-align:right;transform:scaleX(0.87);transform-origin:right;">-9.53</div>
<div class="a" style="left:492px;top:327px;width:14px;height:267px;background:#d3d9e6;"></div>
<svg style="left:495px;top:330px" width="8" height="5"><path d="M0.5 4.5 L4 0.5 L7.5 4.5 Z" fill="#555c68"/></svg>
<svg style="left:495px;top:585px" width="8" height="5"><path d="M0.5 0.5 L4 4.5 L7.5 0.5 Z" fill="#555c68"/></svg>
<div class="a" style="left:495px;top:429.5px;width:8px;height:18.0px;background:#9ea8b8;"></div>
<div class="a" style="left:0px;top:595px;width:507px;height:9px;background:#d5dae7;"></div>
<div class="a" style="left:-2px;top:594px;width:230px;height:1px;background:#a9b3c3;"></div>
<div class="a" style="left:230px;top:594px;width:277px;height:1px;background:#a9b3c3;"></div>
<svg style="left:511px;top:402px" width="5" height="14"><rect x="0" y="0.0" width="1" height="1" fill="#9ba4ba"/><rect x="3" y="0.0" width="1" height="1" fill="#9ba4ba"/><rect x="1.5" y="1.5" width="1" height="1" fill="#9ba4ba"/><rect x="0" y="3.0" width="1" height="1" fill="#9ba4ba"/><rect x="3" y="3.0" width="1" height="1" fill="#9ba4ba"/><rect x="1.5" y="4.5" width="1" height="1" fill="#9ba4ba"/><rect x="0" y="6.0" width="1" height="1" fill="#9ba4ba"/><rect x="3" y="6.0" width="1" height="1" fill="#9ba4ba"/><rect x="1.5" y="7.5" width="1" height="1" fill="#9ba4ba"/><rect x="0" y="9.0" width="1" height="1" fill="#9ba4ba"/><rect x="3" y="9.0" width="1" height="1" fill="#9ba4ba"/><rect x="1.5" y="10.5" width="1" height="1" fill="#9ba4ba"/><rect x="0" y="12.0" width="1" height="1" fill="#9ba4ba"/><rect x="3" y="12.0" width="1" height="1" fill="#9ba4ba"/></svg>
<svg style="left:194px;top:302px" width="14" height="5"><rect x="0.0" y="0" width="1" height="1" fill="#9ba4ba"/><rect x="0.0" y="3" width="1" height="1" fill="#9ba4ba"/><rect x="1.5" y="1.5" width="1" height="1" fill="#9ba4ba"/><rect x="3.0" y="0" width="1" height="1" fill="#9ba4ba"/><rect x="3.0" y="3" width="1" height="1" fill="#9ba4ba"/><rect x="4.5" y="1.5" width="1" height="1" fill="#9ba4ba"/><rect x="6.0" y="0" width="1" height="1" fill="#9ba4ba"/><rect x="6.0" y="3" width="1" height="1" fill="#9ba4ba"/><rect x="7.5" y="1.5" width="1" height="1" fill="#9ba4ba"/><rect x="9.0" y="0" width="1" height="1" fill="#9ba4ba"/><rect x="9.0" y="3" width="1" height="1" fill="#9ba4ba"/><rect x="10.5" y="1.5" width="1" height="1" fill="#9ba4ba"/><rect x="12.0" y="0" width="1" height="1" fill="#9ba4ba"/><rect x="12.0" y="3" width="1" height="1" fill="#9ba4ba"/></svg>
<svg style="left:194px;top:598px" width="14" height="5"><rect x="0.0" y="0" width="1" height="1" fill="#9ba4ba"/><rect x="0.0" y="3" width="1" height="1" fill="#9ba4ba"/><rect x="1.5" y="1.5" width="1" height="1" fill="#9ba4ba"/><rect x="3.0" y="0" width="1" height="1" fill="#9ba4ba"/><rect x="3.0" y="3" width="1" height="1" fill="#9ba4ba"/><rect x="4.5" y="1.5" width="1" height="1" fill="#9ba4ba"/><rect x="6.0" y="0" width="1" height="1" fill="#9ba4ba"/><rect x="6.0" y="3" width="1" height="1" fill="#9ba4ba"/><rect x="7.5" y="1.5" width="1" height="1" fill="#9ba4ba"/><rect x="9.0" y="0" width="1" height="1" fill="#9ba4ba"/><rect x="9.0" y="3" width="1" height="1" fill="#9ba4ba"/><rect x="10.5" y="1.5" width="1" height="1" fill="#9ba4ba"/><rect x="12.0" y="0" width="1" height="1" fill="#9ba4ba"/><rect x="12.0" y="3" width="1" height="1" fill="#9ba4ba"/></svg>
<div class="a" style="left:0px;top:604px;width:507px;height:22px;background:#cfd5e2;"></div>
<div class="a" style="left:-10px;top:607px;width:110px;height:17px;background:#fff;border:1px solid #b7bfcc"></div>
<div class="t" style="left:-1px;top:609.50px;transform:scaleX(0.87);transform-origin:left;">ined</div>
<svg style="left:89px;top:613px" width="7" height="4"><path d="M0 0 H6 L3 3 Z" fill="#555"/></svg>
<div class="a" style="left:106px;top:607px;width:70px;height:17px;background:#fff;border:1px solid #b7bfcc"></div>
<div class="t" style="left:110px;top:609.50px;transform:scaleX(0.87);transform-origin:left;">Auto</div>
<svg style="left:165px;top:613px" width="7" height="4"><path d="M0 0 H6 L3 3 Z" fill="#555"/></svg>
<div class="a" style="left:388px;top:610px;width:10px;height:10px;background:#fff;border:1px solid #9aa3b2"></div>
<div class="t" style="left:401px;top:608.50px;color:#2a3447;transform:scaleX(0.87);transform-origin:left;letter-spacing:0.2px;">Ignore Today's Trades</div>
<div class="a" style="left:0px;top:626px;width:507px;height:18px;background:#f4f7fb;border-top:1px solid #c4cbd8;"></div>
<div class="a" style="left:0px;top:644.5px;width:507px;height:31px;background:#ffffff;"></div>
<div class="a" style="left:0px;top:643.5px;width:507px;height:1px;background:#dde2ea;"></div>
<div class="a" style="left:0px;top:659.5px;width:507px;height:1px;background:#e2e6ee;"></div>
<div class="a" style="left:34px;top:626px;width:1px;height:49px;background:#d6dce6;"></div>
<div class="a" style="left:80px;top:626px;width:1px;height:49px;background:#d6dce6;"></div>
<div class="a" style="left:127px;top:626px;width:1px;height:49px;background:#d6dce6;"></div>
<div class="a" style="left:174px;top:626px;width:1px;height:49px;background:#d6dce6;"></div>
<div class="a" style="left:221px;top:626px;width:1px;height:49px;background:#d6dce6;"></div>
<div class="a" style="left:267px;top:626px;width:1px;height:49px;background:#d6dce6;"></div>
<div class="a" style="left:314px;top:626px;width:1px;height:49px;background:#d6dce6;"></div>
<div class="a" style="left:361px;top:626px;width:1px;height:49px;background:#d6dce6;"></div>
<div class="a" style="left:408px;top:626px;width:1px;height:49px;background:#d6dce6;"></div>
<div class="a" style="left:455px;top:626px;width:1px;height:49px;background:#d6dce6;"></div>
<div class="a" style="left:507px;top:626.5px;width:1px;height:48.5px;background:#b9c1ce;"></div>
<div class="t" style="left:-20px;top:629.00px;color:#3c475a;width:54px;text-align:left;transform:scaleX(0.87);transform-origin:left;padding-left:22px;">Cost</div>
<div class="t" style="left:-20px;top:646.50px;color:#1f2a3d;width:52.5px;text-align:right;transform:scaleX(0.87);transform-origin:right;">-909.80</div>
<div class="t" style="left:34px;top:629.00px;color:#3c475a;width:46px;text-align:center;transform:scaleX(0.87);transform-origin:center;padding-left:0px;">Curr C...</div>
<div class="t" style="left:34px;top:646.50px;color:#1f2a3d;width:44.5px;text-align:right;transform:scaleX(0.87);transform-origin:right;">910.00</div>
<div class="t" style="left:80px;top:629.00px;color:#3c475a;width:47px;text-align:center;transform:scaleX(0.87);transform-origin:center;padding-left:0px;">Commi...</div>
<div class="t" style="left:80px;top:646.50px;color:#1f2a3d;width:45.5px;text-align:right;transform:scaleX(0.87);transform-origin:right;">4.80</div>
<div class="t" style="left:127px;top:629.00px;color:#3c475a;width:47px;text-align:center;transform:scaleX(0.87);transform-origin:center;padding-left:0px;">PnL</div>
<div class="t" style="left:127px;top:646.50px;color:#2f9a3c;width:45.5px;text-align:right;transform:scaleX(0.87);transform-origin:right;">0.20</div>
<div class="t" style="left:174px;top:629.00px;color:#3c475a;width:47px;text-align:center;transform:scaleX(0.87);transform-origin:center;padding-left:0px;">PnL%</div>
<div class="t" style="left:174px;top:646.50px;color:#2f9a3c;width:45.5px;text-align:right;transform:scaleX(0.87);transform-origin:right;">0.02%</div>
<div class="t" style="left:221px;top:629.00px;color:#3c475a;width:46px;text-align:center;transform:scaleX(0.87);transform-origin:center;padding-left:0px;">Delta</div>
<div class="t" style="left:221px;top:646.50px;color:#1f2a3d;width:44.5px;text-align:right;transform:scaleX(0.87);transform-origin:right;">-3.83</div>
<div class="t" style="left:221px;top:662.00px;color:#1f2a3d;width:44.5px;text-align:right;transform:scaleX(0.87);transform-origin:right;">0.00</div>
<div class="t" style="left:267px;top:629.00px;color:#3c475a;width:47px;text-align:center;transform:scaleX(0.87);transform-origin:center;padding-left:0px;">Gamma</div>
<div class="t" style="left:267px;top:646.50px;color:#1f2a3d;width:45.5px;text-align:right;transform:scaleX(0.87);transform-origin:right;">0.01</div>
<div class="t" style="left:267px;top:662.00px;color:#1f2a3d;width:45.5px;text-align:right;transform:scaleX(0.87);transform-origin:right;">0.00</div>
<div class="t" style="left:314px;top:629.00px;color:#3c475a;width:47px;text-align:center;transform:scaleX(0.87);transform-origin:center;padding-left:0px;">Theta</div>
<div class="t" style="left:314px;top:646.50px;color:#1f2a3d;width:45.5px;text-align:right;transform:scaleX(0.87);transform-origin:right;">1.79</div>
<div class="t" style="left:314px;top:662.00px;color:#1f2a3d;width:45.5px;text-align:right;transform:scaleX(0.87);transform-origin:right;">0.00</div>
<div class="t" style="left:361px;top:629.00px;color:#3c475a;width:47px;text-align:center;transform:scaleX(0.87);transform-origin:center;padding-left:0px;">Vega</div>
<div class="t" style="left:361px;top:646.50px;color:#1f2a3d;width:45.5px;text-align:right;transform:scaleX(0.87);transform-origin:right;">50.07</div>
<div class="t" style="left:361px;top:662.00px;color:#1f2a3d;width:45.5px;text-align:right;transform:scaleX(0.87);transform-origin:right;">0.00</div>
<div class="t" style="left:408px;top:629.00px;color:#3c475a;width:47px;text-align:center;transform:scaleX(0.87);transform-origin:center;padding-left:0px;">T/D</div>
<div class="t" style="left:408px;top:646.50px;color:#1f2a3d;width:45.5px;text-align:right;transform:scaleX(0.87);transform-origin:right;">0.5</div>
<div class="t" style="left:408px;top:662.00px;color:#1f2a3d;width:45.5px;text-align:right;transform:scaleX(0.87);transform-origin:right;">0</div>
<div class="t" style="left:455px;top:629.00px;color:#3c475a;width:52px;text-align:center;transform:scaleX(0.87);transform-origin:center;padding-left:0px;">Plot</div>
<svg style="left:476px;top:646px" width="11" height="11"><rect x="0.5" y="0.5" width="10" height="10" fill="#fff" stroke="#b0b6c0"/><path d="M2.5 5.5 L4.5 7.5 L8.5 2.5" fill="none" stroke="#6a7080" stroke-width="1"/></svg>
<svg style="left:476px;top:662px" width="11" height="11"><rect x="0.5" y="0.5" width="10" height="10" fill="#fff" stroke="#b0b6c0"/><path d="M2.5 5.5 L4.5 7.5 L8.5 2.5" fill="none" stroke="#6a7080" stroke-width="1"/></svg>
<div class="a" style="left:518px;top:137px;width:1px;height:518px;background:#b3bccc;"></div>
<div class="a" style="left:519px;top:137px;width:561px;height:44px;background:#d6dbe8;"></div>
<div class="a" style="left:519px;top:160px;width:561px;height:1px;background:#b8c0cf;"></div>
<div class="a" style="left:519px;top:138.5px;width:64px;height:23px;background:#d8dde9;"></div>
<div class="t" style="left:528px;top:142.70px;color:#2c3649;transform:scaleX(0.87);transform-origin:left;">Risk Chart</div>
<div class="a" style="left:583px;top:139px;width:67px;height:21.5px;background:#ccd3e1;border-left:1px solid #b8c0cf;border-top:1px solid #c0c8d6;border-right:1px solid #b8c0cf;border-bottom:1px solid #b8c0cf;"></div>
<div class="t" style="left:592.5px;top:142.70px;color:#2c3649;transform:scaleX(0.87);transform-origin:left;">Price Chart</div>
<div class="a" style="left:650px;top:139px;width:106px;height:21.5px;background:#ccd3e1;border-left:1px solid #b8c0cf;border-top:1px solid #c0c8d6;border-right:1px solid #b8c0cf;border-bottom:1px solid #b8c0cf;"></div>
<div class="t" style="left:659.7px;top:142.70px;color:#2c3649;transform:scaleX(0.87);transform-origin:left;">Movement Analysis</div>
<div class="a" style="left:756px;top:139px;width:54px;height:21.5px;background:#ccd3e1;border-left:1px solid #b8c0cf;border-top:1px solid #c0c8d6;border-right:1px solid #b8c0cf;border-bottom:1px solid #b8c0cf;"></div>
<div class="t" style="left:765.4px;top:142.70px;color:#2c3649;transform:scaleX(0.87);transform-origin:left;">Volatility</div>
<div class="a" style="left:810px;top:139px;width:134.5px;height:21.5px;background:#ccd3e1;border-left:1px solid #b8c0cf;border-top:1px solid #c0c8d6;border-right:1px solid #b8c0cf;border-bottom:1px solid #b8c0cf;"></div>
<div class="t" style="left:820px;top:142.70px;color:#2c3649;transform:scaleX(0.87);transform-origin:left;">Statistics &amp; Fundamentals</div>
<div class="a" style="left:519px;top:161px;width:561px;height:20.5px;background:#d8dde9;"></div>
<div class="t" style="left:523.5px;top:165.50px;color:#2c3649;transform:scaleX(0.87);transform-origin:left;">Vol Adjust</div>
<div class="a" style="left:572.5px;top:163px;width:45px;height:16.5px;background:#fff;border:1px solid #b7bfcc"></div>
<div class="t" style="left:580px;top:165.50px;width:22px;text-align:right;transform:scaleX(0.87);transform-origin:right;">0</div>
<svg style="left:607px;top:165px" width="7" height="13"><path d="M0.5 4 L3.5 1 L6.5 4 Z M0.5 8.5 L3.5 11.5 L6.5 8.5 Z" fill="#555c68"/></svg>
<div class="t" style="left:989px;top:165.50px;color:#2c3649;transform:scaleX(0.87);transform-origin:left;">Projection</div>
<div class="a" style="left:1036.5px;top:163px;width:60px;height:16.5px;background:#fff;border:1px solid #b7bfcc"></div>
<div class="t" style="left:1040px;top:165.50px;transform:scaleX(0.87);transform-origin:left;">21/07/2025</div>
<div class="a" style="left:519px;top:181.5px;width:561px;height:473.5px;background:#ffffff;"></div>
<svg style="left:0;top:0" width="1080" height="675"><rect x="974" y="197.5" width="44.40" height="277.5" fill="#92cbd9"/><rect x="1018.40" y="197.5" width="61.60" height="277.5" fill="#4f80bd"/><line x1="566.5" y1="197.50" x2="974" y2="197.50" stroke="#e2e2e2" stroke-width="1"/><line x1="974" y1="197.50" x2="1080" y2="197.50" stroke="#f4f4f4" stroke-width="1" opacity="0.45"/><line x1="566.5" y1="222.50" x2="974" y2="222.50" stroke="#e2e2e2" stroke-width="1"/><line x1="974" y1="222.50" x2="1080" y2="222.50" stroke="#f4f4f4" stroke-width="1" opacity="0.45"/><line x1="566.5" y1="247.50" x2="974" y2="247.50" stroke="#e2e2e2" stroke-width="1"/><line x1="974" y1="247.50" x2="1080" y2="247.50" stroke="#f4f4f4" stroke-width="1" opacity="0.45"/><line x1="566.5" y1="273.50" x2="974" y2="273.50" stroke="#e2e2e2" stroke-width="1"/><line x1="974" y1="273.50" x2="1080" y2="273.50" stroke="#f4f4f4" stroke-width="1" opacity="0.45"/><line x1="566.5" y1="298.50" x2="974" y2="298.50" stroke="#e2e2e2" stroke-width="1"/><line x1="974" y1="298.50" x2="1080" y2="298.50" stroke="#f4f4f4" stroke-width="1" opacity="0.45"/><line x1="566.5" y1="323.50" x2="974" y2="323.50" stroke="#e2e2e2" stroke-width="1"/><line x1="974" y1="323.50" x2="1080" y2="323.50" stroke="#f4f4f4" stroke-width="1" opacity="0.45"/><line x1="566.5" y1="348.50" x2="974" y2="348.50" stroke="#e2e2e2" stroke-width="1"/><line x1="974" y1="348.50" x2="1080" y2="348.50" stroke="#f4f4f4" stroke-width="1" opacity="0.45"/><line x1="566.5" y1="374.50" x2="974" y2="374.50" stroke="#e2e2e2" stroke-width="1"/><line x1="974" y1="374.50" x2="1080" y2="374.50" stroke="#f4f4f4" stroke-width="1" opacity="0.45"/><line x1="566.5" y1="399.50" x2="974" y2="399.50" stroke="#e2e2e2" stroke-width="1"/><line x1="974" y1="399.50" x2="1080" y2="399.50" stroke="#f4f4f4" stroke-width="1" opacity="0.45"/><line x1="566.5" y1="424.50" x2="974" y2="424.50" stroke="#e2e2e2" stroke-width="1"/><line x1="974" y1="424.50" x2="1080" y2="424.50" stroke="#f4f4f4" stroke-width="1" opacity="0.45"/><line x1="566.5" y1="449.50" x2="974" y2="449.50" stroke="#e2e2e2" stroke-width="1"/><line x1="974" y1="449.50" x2="1080" y2="449.50" stroke="#f4f4f4" stroke-width="1" opacity="0.45"/><line x1="566.5" y1="475.50" x2="974" y2="475.50" stroke="#e2e2e2" stroke-width="1"/><line x1="974" y1="475.50" x2="1080" y2="475.50" stroke="#f4f4f4" stroke-width="1" opacity="0.45"/><line x1="576.50" y1="197.5" x2="576.50" y2="477" stroke="#e2e2e2" stroke-width="1"/><line x1="625.50" y1="197.5" x2="625.50" y2="477" stroke="#e2e2e2" stroke-width="1"/><line x1="674.50" y1="197.5" x2="674.50" y2="477" stroke="#e2e2e2" stroke-width="1"/><line x1="723.50" y1="197.5" x2="723.50" y2="477" stroke="#e2e2e2" stroke-width="1"/><line x1="772.50" y1="197.5" x2="772.50" y2="477" stroke="#e2e2e2" stroke-width="1"/><line x1="822.50" y1="197.5" x2="822.50" y2="477" stroke="#e2e2e2" stroke-width="1"/><line x1="871.50" y1="197.5" x2="871.50" y2="477" stroke="#e2e2e2" stroke-width="1"/><line x1="920.50" y1="197.5" x2="920.50" y2="477" stroke="#e2e2e2" stroke-width="1"/><line x1="969.50" y1="197.5" x2="969.50" y2="477" stroke="#e2e2e2" stroke-width="1"/><line x1="1018.50" y1="197.5" x2="1018.50" y2="475" stroke="#f4f4f4" stroke-width="1" opacity="0.45"/><line x1="1018.50" y1="475" x2="1018.50" y2="477" stroke="#e2e2e2" stroke-width="1"/><line x1="1067.50" y1="197.5" x2="1067.50" y2="475" stroke="#f4f4f4" stroke-width="1" opacity="0.45"/><line x1="1067.50" y1="475" x2="1067.50" y2="477" stroke="#e2e2e2" stroke-width="1"/><line x1="566.5" y1="197.5" x2="566.5" y2="475" stroke="#e4e4e4" stroke-width="1"/><line x1="812" y1="197.5" x2="812" y2="475" stroke="#bb6cc8" stroke-width="1.2" stroke-dasharray="3.5 2.5"/><line x1="566.5" y1="449.50" x2="1080" y2="449.50" stroke="#303030" stroke-width="1"/><path d="M565.5 394.8 C575.42 395.43 606.87 397.13 625 398.6 C643.13 400.07 657.85 401.88 674.3 403.6 C690.75 405.32 707.25 406.97 723.7 408.9 C740.15 410.83 756.95 413.10 773 415.2 C789.05 417.30 803.83 419.33 820 421.5 C836.17 423.67 853.33 426.00 870 428.2 C886.67 430.40 902.67 432.58 920 434.7 C937.33 436.82 957.67 439.13 974 440.9 C990.33 442.67 1002.50 443.90 1018 445.3 C1033.50 446.70 1056.67 448.42 1067 449.3 C1077.33 450.18 1077.83 450.38 1080 450.6" fill="none" stroke="#f06a6a" stroke-width="1.2"/><path d="M565.5 414.8 C575.42 415.30 606.92 416.87 625 417.8 C643.08 418.73 657.50 419.48 674 420.4 C690.50 421.32 707.50 422.20 724 423.3 C740.50 424.40 757.00 425.63 773 427.0 C789.00 428.37 803.83 430.02 820 431.5 C836.17 432.98 853.33 434.55 870 435.9 C886.67 437.25 902.67 438.45 920 439.6 C937.33 440.75 957.67 441.83 974 442.8 C990.33 443.77 1004.50 444.52 1018 445.4 C1031.50 446.28 1044.67 447.37 1055 448.1 C1065.33 448.83 1075.83 449.52 1080 449.8" fill="none" stroke="#5ee05e" stroke-width="1.2"/><polyline points="565.5,284 625.60,209 822.00,460.8 1080,460.8" fill="none" stroke="#4a55c8" stroke-width="1.6"/><rect x="1073" y="445" width="8" height="6" fill="#c09080" opacity="0.8"/></svg>
<div class="t" style="left:546.5px;top:184.00px;font-size:10px;color:#2a2a2a;width:60px;text-align:center;transform:scaleX(0.87);transform-origin:center;">-7.9%</div>
<div class="t" style="left:546.5px;top:479.60px;font-size:10px;color:#2a2a2a;width:60px;text-align:center;transform:scaleX(0.87);transform-origin:center;">5800</div>
<div class="t" style="left:595.6px;top:184.00px;font-size:10px;color:#2a2a2a;width:60px;text-align:center;transform:scaleX(0.87);transform-origin:center;">-7.1%</div>
<div class="t" style="left:595.6px;top:479.60px;font-size:10px;color:#2a2a2a;width:60px;text-align:center;transform:scaleX(0.87);transform-origin:center;">5850</div>
<div class="t" style="left:644.7px;top:184.00px;font-size:10px;color:#2a2a2a;width:60px;text-align:center;transform:scaleX(0.87);transform-origin:center;">-6.3%</div>
<div class="t" style="left:644.7px;top:479.60px;font-size:10px;color:#2a2a2a;width:60px;text-align:center;transform:scaleX(0.87);transform-origin:center;">5900</div>
<div class="t" style="left:693.8px;top:184.00px;font-size:10px;color:#2a2a2a;width:60px;text-align:center;transform:scaleX(0.87);transform-origin:center;">-5.5%</div>
<div class="t" style="left:693.8px;top:479.60px;font-size:10px;color:#2a2a2a;width:60px;text-align:center;transform:scaleX(0.87);transform-origin:center;">5950</div>
<div class="t" style="left:742.9px;top:184.00px;font-size:10px;color:#2a2a2a;width:60px;text-align:center;transform:scaleX(0.87);transform-origin:center;">-4.7%</div>
<div class="t" style="left:742.9px;top:479.60px;font-size:10px;color:#2a2a2a;width:60px;text-align:center;transform:scaleX(0.87);transform-origin:center;">6000</div>
<div class="t" style="left:792.0px;top:184.00px;font-size:10px;color:#2a2a2a;width:60px;text-align:center;transform:scaleX(0.87);transform-origin:center;">-3.9%</div>
<div class="t" style="left:792.0px;top:479.60px;font-size:10px;color:#2a2a2a;width:60px;text-align:center;transform:scaleX(0.87);transform-origin:center;">6050</div>
<div class="t" style="left:841.1px;top:184.00px;font-size:10px;color:#2a2a2a;width:60px;text-align:center;transform:scaleX(0.87);transform-origin:center;">-3.1%</div>
<div class="t" style="left:841.1px;top:479.60px;font-size:10px;color:#2a2a2a;width:60px;text-align:center;transform:scaleX(0.87);transform-origin:center;">6100</div>
<div class="t" style="left:890.2px;top:184.00px;font-size:10px;color:#2a2a2a;width:60px;text-align:center;transform:scaleX(0.87);transform-origin:center;">-2.3%</div>
<div class="t" style="left:890.2px;top:479.60px;font-size:10px;color:#2a2a2a;width:60px;text-align:center;transform:scaleX(0.87);transform-origin:center;">6150</div>
<div class="t" style="left:939.3px;top:184.00px;font-size:10px;color:#2a2a2a;width:60px;text-align:center;transform:scaleX(0.87);transform-origin:center;">-1.5%</div>
<div class="t" style="left:939.3px;top:479.60px;font-size:10px;color:#2a2a2a;width:60px;text-align:center;transform:scaleX(0.87);transform-origin:center;">6200</div>
<div class="t" style="left:988.4px;top:184.00px;font-size:10px;color:#2a2a2a;width:60px;text-align:center;transform:scaleX(0.87);transform-origin:center;">-0.7%</div>
<div class="t" style="left:988.4px;top:479.60px;font-size:10px;color:#2a2a2a;width:60px;text-align:center;transform:scaleX(0.87);transform-origin:center;">6250</div>
<div class="t" style="left:1037.5px;top:184.00px;font-size:10px;color:#2a2a2a;width:60px;text-align:center;transform:scaleX(0.87);transform-origin:center;">0.1%</div>
<div class="t" style="left:1037.5px;top:479.60px;font-size:10px;color:#2a2a2a;width:60px;text-align:center;transform:scaleX(0.87);transform-origin:center;">6300</div>
<div class="t" style="left:500px;top:192.10px;font-size:10px;color:#2a2a2a;width:61px;text-align:right;transform:scaleX(0.87);transform-origin:right;">2198%</div>
<div class="t" style="left:500px;top:217.33px;font-size:10px;color:#2a2a2a;width:61px;text-align:right;transform:scaleX(0.87);transform-origin:right;">1978%</div>
<div class="t" style="left:500px;top:242.56px;font-size:10px;color:#2a2a2a;width:61px;text-align:right;transform:scaleX(0.87);transform-origin:right;">1759%</div>
<div class="t" style="left:500px;top:267.79px;font-size:10px;color:#2a2a2a;width:61px;text-align:right;transform:scaleX(0.87);transform-origin:right;">1539%</div>
<div class="t" style="left:500px;top:293.02px;font-size:10px;color:#2a2a2a;width:61px;text-align:right;transform:scaleX(0.87);transform-origin:right;">1319%</div>
<div class="t" style="left:500px;top:318.25px;font-size:10px;color:#2a2a2a;width:61px;text-align:right;transform:scaleX(0.87);transform-origin:right;">1099%</div>
<div class="t" style="left:500px;top:343.48px;font-size:10px;color:#2a2a2a;width:61px;text-align:right;transform:scaleX(0.87);transform-origin:right;">879%</div>
<div class="t" style="left:500px;top:368.71px;font-size:10px;color:#2a2a2a;width:61px;text-align:right;transform:scaleX(0.87);transform-origin:right;">659%</div>
<div class="t" style="left:500px;top:393.94px;font-size:10px;color:#2a2a2a;width:61px;text-align:right;transform:scaleX(0.87);transform-origin:right;">440%</div>
<div class="t" style="left:500px;top:419.17px;font-size:10px;color:#2a2a2a;width:61px;text-align:right;transform:scaleX(0.87);transform-origin:right;">220%</div>
<div class="t" style="left:500px;top:469.63px;font-size:10px;color:#2a2a2a;width:61px;text-align:right;transform:scaleX(0.87);transform-origin:right;">-220%</div>
<div class="a" style="left:524px;top:443px;width:39px;height:11.5px;background:#008000;"></div>
<div class="t" style="left:500px;top:444.80px;font-size:10px;color:#ffffff;width:61px;text-align:right;transform:scaleX(0.87);transform-origin:right;">0%</div>
<div class="t" style="left:800.5px;top:473px;font-size:10px;color:#a050b0;transform:rotate(-90deg) scaleX(0.87);transform-origin:0 0;">6039.33</div>
<div class="t" style="left:975.5px;top:232.5px;font-size:10px;color:#5a8ac8;transform:rotate(-90deg) scaleX(0.87);transform-origin:0 0;">6205.33</div>
<div class="t" style="left:1021px;top:232.5px;font-size:10px;color:#a8c4e8;transform:rotate(-90deg) scaleX(0.87);transform-origin:0 0;">6251.06</div>
<div class="t" style="left:679px;top:458.00px;font-size:10.5px;color:#9040a8;transform:scaleX(0.87);transform-origin:left;">9.7%</div>
<div class="t" style="left:967px;top:458.00px;font-size:10.5px;color:#a050b0;transform:scaleX(0.87);transform-origin:left;">90.3%</div>
<div class="a" style="left:570px;top:202px;width:139px;height:59.5px;background:rgba(232,236,244,0.85);border:1px solid #8a96aa;border-radius:4px"></div>
<div class="a" style="left:577.2px;top:209px;width:3px;height:10px;background:#e04848;"></div>
<div class="a" style="left:577.2px;top:221px;width:3px;height:10px;background:#7aa2e0;"></div>
<div class="a" style="left:577.2px;top:232.6px;width:3px;height:10px;background:#7aa2e0;"></div>
<div class="a" style="left:577.2px;top:244.5px;width:3px;height:10px;background:#7aa2e0;"></div>
<div class="t" style="left:580px;top:209.90px;font-size:10.5px;color:#5e5e5e;transform:scaleX(0.86);transform-origin:left;">-4.80 Realized PnL</div>
<div class="t" style="left:580px;top:221.40px;font-size:10.5px;color:#4e4e4e;transform:scaleX(0.86);transform-origin:left;">+1 <span style="color:#5a6cf0">05sep. 5650 Put Δ</span></div>
<div class="t" style="left:580px;top:232.90px;font-size:10.5px;color:#4e4e4e;transform:scaleX(0.86);transform-origin:left;">+1 <span style="color:#5a6cf0">05sep. 6050 Put Δ</span></div>
<div class="t" style="left:580px;top:244.30px;font-size:10.5px;color:#4e4e4e;transform:scaleX(0.86);transform-origin:left;">-2 <span style="color:#f06868">05sep. 5850 Put Δ</span></div>
<div class="t" style="left:650px;top:221.40px;font-size:10.5px;color:#5a6cf0;width:52px;text-align:right;transform:scaleX(0.86);transform-origin:right;">-7.01</div>
<div class="t" style="left:650px;top:232.90px;font-size:10.5px;color:#5a6cf0;width:52px;text-align:right;transform:scaleX(0.86);transform-origin:right;">-20.49</div>
<div class="t" style="left:650px;top:244.30px;font-size:10.5px;color:#f06868;width:49.5px;text-align:right;transform:scaleX(0.86);transform-origin:right;">-11.83</div>
<div class="a" style="left:570px;top:424px;width:98px;height:47.5px;background:rgba(232,236,244,0.85);border:1px solid #8a96aa;border-radius:4px"></div>
<div class="t" style="left:577px;top:430.50px;font-size:10px;color:#858ce0;transform:scaleX(0.87);transform-origin:left;">05/09/2025 (0)</div>
<div class="t" style="left:577px;top:442.00px;font-size:10px;color:#f07878;transform:scaleX(0.87);transform-origin:left;">13/08/2025 (23) T+23</div>
<div class="t" style="left:577px;top:454.00px;font-size:10px;color:#a2c0f0;transform:scaleX(0.87);transform-origin:left;">21/07/2025 (46) T+0</div>
<div class="a" style="left:1043px;top:202px;width:60px;height:37px;background:rgba(208,222,240,0.85);border:1px solid #5c7398;border-radius:4px"></div>
<div class="t" style="left:1052px;top:206.00px;font-size:10.5px;color:#3a3a3a;font-weight:bold;transform:scaleX(0.9);transform-origin:left;">Commit</div>
<div class="t" style="left:1052px;top:223.00px;font-size:10.5px;color:#3a3a3a;transform:scaleX(0.9);transform-origin:left;">Trade Cost</div>
<div class="a" style="left:522px;top:493px;width:552px;height:159px;background:#e8eef7;border:1px solid #8c97a9;border-radius:4px"></div>
<svg style="left:0;top:0" width="1080" height="675"><line x1="567" y1="516.8" x2="1073" y2="516.8" stroke="#a8a8a8" stroke-width="1"/><rect x="567.00" y="507.80" width="34.05" height="9.00" fill="#5a7cf4" stroke="#5c6272" stroke-width="0.9"/><rect x="601.05" y="508.50" width="49.10" height="8.30" fill="#5a7cf4" stroke="#5c6272" stroke-width="0.9"/><rect x="650.15" y="509.32" width="49.10" height="7.48" fill="#5a7cf4" stroke="#5c6272" stroke-width="0.9"/><rect x="699.25" y="510.22" width="49.10" height="6.58" fill="#5a7cf4" stroke="#5c6272" stroke-width="0.9"/><rect x="748.35" y="511.18" width="49.10" height="5.62" fill="#5a7cf4" stroke="#5c6272" stroke-width="0.9"/><rect x="797.45" y="512.16" width="49.10" height="4.64" fill="#5a7cf4" stroke="#5c6272" stroke-width="0.9"/><rect x="846.55" y="513.13" width="49.10" height="3.67" fill="#5a7cf4" stroke="#5c6272" stroke-width="0.9"/><rect x="895.65" y="514.05" width="49.10" height="2.75" fill="#5a7cf4" stroke="#5c6272" stroke-width="0.9"/><rect x="944.75" y="514.93" width="49.10" height="1.87" fill="#5a7cf4" stroke="#5c6272" stroke-width="0.9"/><rect x="993.85" y="515.72" width="49.10" height="1.08" fill="#5a7cf4" stroke="#5c6272" stroke-width="0.9"/><rect x="1042.95" y="516.44" width="30.05" height="0.36" fill="#5a7cf4" stroke="#5c6272" stroke-width="0.9"/><line x1="567" y1="553.5" x2="1073" y2="553.5" stroke="#a8a8a8" stroke-width="1"/><rect x="567.00" y="553.50" width="34.05" height="6.00" fill="#f27a7c" stroke="#5c6272" stroke-width="0.9"/><rect x="601.05" y="553.50" width="49.10" height="7.31" fill="#f27a7c" stroke="#5c6272" stroke-width="0.9"/><rect x="650.15" y="553.50" width="49.10" height="8.29" fill="#f27a7c" stroke="#5c6272" stroke-width="0.9"/><rect x="699.25" y="553.50" width="49.10" height="8.94" fill="#f27a7c" stroke="#5c6272" stroke-width="0.9"/><rect x="748.35" y="553.50" width="49.10" height="9.27" fill="#f27a7c" stroke="#5c6272" stroke-width="0.9"/><rect x="797.45" y="553.50" width="49.10" height="9.30" fill="#f27a7c" stroke="#5c6272" stroke-width="0.9"/><rect x="846.55" y="553.50" width="49.10" height="9.07" fill="#f27a7c" stroke="#5c6272" stroke-width="0.9"/><rect x="895.65" y="553.50" width="49.10" height="8.61" fill="#f27a7c" stroke="#5c6272" stroke-width="0.9"/><rect x="944.75" y="553.50" width="49.10" height="7.98" fill="#f27a7c" stroke="#5c6272" stroke-width="0.9"/><rect x="993.85" y="553.50" width="49.10" height="7.24" fill="#f27a7c" stroke="#5c6272" stroke-width="0.9"/><rect x="1042.95" y="553.50" width="30.05" height="6.43" fill="#f27a7c" stroke="#5c6272" stroke-width="0.9"/><line x1="567" y1="580.8" x2="1073" y2="580.8" stroke="#a8a8a8" stroke-width="1"/><rect x="567.00" y="580.80" width="34.05" height="8.80" fill="#f27a7c" stroke="#5c6272" stroke-width="0.9"/><rect x="601.05" y="580.80" width="49.10" height="4.40" fill="#f27a7c" stroke="#5c6272" stroke-width="0.9"/><rect x="650.15" y="580.80" width="49.10" height="4.40" fill="#f27a7c" stroke="#5c6272" stroke-width="0.9"/><rect x="699.25" y="580.80" width="49.10" height="4.40" fill="#f27a7c" stroke="#5c6272" stroke-width="0.9"/><rect x="895.65" y="576.40" width="49.10" height="4.40" fill="#5a7cf4" stroke="#5c6272" stroke-width="0.9"/><rect x="944.75" y="576.40" width="49.10" height="4.40" fill="#5a7cf4" stroke="#5c6272" stroke-width="0.9"/><rect x="993.85" y="576.40" width="49.10" height="4.40" fill="#5a7cf4" stroke="#5c6272" stroke-width="0.9"/><rect x="1042.95" y="576.40" width="30.05" height="4.40" fill="#5a7cf4" stroke="#5c6272" stroke-width="0.9"/><line x1="567" y1="608.5" x2="1073" y2="608.5" stroke="#a8a8a8" stroke-width="1"/><rect x="567.00" y="599.00" width="34.05" height="9.50" fill="#5a7cf4" stroke="#5c6272" stroke-width="0.9"/><rect x="601.05" y="599.31" width="49.10" height="9.19" fill="#5a7cf4" stroke="#5c6272" stroke-width="0.9"/><rect x="650.15" y="599.94" width="49.10" height="8.56" fill="#5a7cf4" stroke="#5c6272" stroke-width="0.9"/><rect x="699.25" y="600.83" width="49.10" height="7.67" fill="#5a7cf4" stroke="#5c6272" stroke-width="0.9"/><rect x="748.35" y="601.88" width="49.10" height="6.62" fill="#5a7cf4" stroke="#5c6272" stroke-width="0.9"/><rect x="797.45" y="603.02" width="49.10" height="5.48" fill="#5a7cf4" stroke="#5c6272" stroke-width="0.9"/><rect x="846.55" y="604.17" width="49.10" height="4.33" fill="#5a7cf4" stroke="#5c6272" stroke-width="0.9"/><rect x="895.65" y="605.26" width="49.10" height="3.24" fill="#5a7cf4" stroke="#5c6272" stroke-width="0.9"/><rect x="944.75" y="606.25" width="49.10" height="2.25" fill="#5a7cf4" stroke="#5c6272" stroke-width="0.9"/><rect x="993.85" y="607.10" width="49.10" height="1.40" fill="#5a7cf4" stroke="#5c6272" stroke-width="0.9"/><rect x="1042.95" y="607.79" width="30.05" height="0.71" fill="#5a7cf4" stroke="#5c6272" stroke-width="0.9"/><line x1="567" y1="636.6" x2="1073" y2="636.6" stroke="#a8a8a8" stroke-width="1"/><rect x="567.00" y="636.60" width="34.05" height="8.40" fill="#f27a7c" stroke="#5c6272" stroke-width="0.9"/><rect x="601.05" y="636.60" width="49.10" height="7.49" fill="#f27a7c" stroke="#5c6272" stroke-width="0.9"/><rect x="650.15" y="636.60" width="49.10" height="6.34" fill="#f27a7c" stroke="#5c6272" stroke-width="0.9"/><rect x="699.25" y="636.60" width="49.10" height="5.04" fill="#f27a7c" stroke="#5c6272" stroke-width="0.9"/><rect x="748.35" y="636.60" width="49.10" height="3.67" fill="#f27a7c" stroke="#5c6272" stroke-width="0.9"/><rect x="797.45" y="636.60" width="49.10" height="2.33" fill="#f27a7c" stroke="#5c6272" stroke-width="0.9"/><rect x="846.55" y="636.60" width="49.10" height="1.08" fill="#f27a7c" stroke="#5c6272" stroke-width="0.9"/><rect x="944.75" y="635.68" width="49.10" height="0.92" fill="#5a7cf4" stroke="#5c6272" stroke-width="0.9"/><rect x="993.85" y="634.98" width="49.10" height="1.62" fill="#5a7cf4" stroke="#5c6272" stroke-width="0.9"/><rect x="1042.95" y="634.49" width="30.05" height="2.11" fill="#5a7cf4" stroke="#5c6272" stroke-width="0.9"/></svg>
<div class="t" style="left:515px;top:512.00px;font-size:11px;color:#6c7074;width:60px;text-align:center;transform:scaleX(0.84);transform-origin:center;">PnL</div>
<div class="t" style="left:515px;top:549.00px;font-size:11px;color:#6c7074;width:60px;text-align:center;transform:scaleX(0.84);transform-origin:center;">Delta</div>
<div class="t" style="left:515px;top:576.30px;font-size:11px;color:#6c7074;width:60px;text-align:center;transform:scaleX(0.84);transform-origin:center;">Gamma</div>
<div class="t" style="left:515px;top:603.60px;font-size:11px;color:#6c7074;width:60px;text-align:center;transform:scaleX(0.84);transform-origin:center;">Theta</div>
<div class="t" style="left:515px;top:631.60px;font-size:11px;color:#6c7074;width:60px;text-align:center;transform:scaleX(0.84);transform-origin:center;">Vega</div>
<div class="t" style="left:546.5px;top:517.20px;font-size:10px;color:#7480f2;width:60px;text-align:center;transform:scaleX(0.87);transform-origin:center;">2754</div>
<div class="t" style="left:546.5px;top:525.70px;font-size:10px;color:#7480f2;width:60px;text-align:center;transform:scaleX(0.87);transform-origin:center;">303%</div>
<div class="t" style="left:546.5px;top:544.00px;font-size:10px;color:#f27676;width:60px;text-align:center;transform:scaleX(0.87);transform-origin:center;">-3.85</div>
<div class="t" style="left:546.5px;top:571.50px;font-size:10px;color:#f27676;width:60px;text-align:center;transform:scaleX(0.87);transform-origin:center;">-0.02</div>
<div class="t" style="left:546.5px;top:608.30px;font-size:10px;color:#7480f2;width:60px;text-align:center;transform:scaleX(0.87);transform-origin:center;">43.26</div>
<div class="t" style="left:546.5px;top:626.50px;font-size:10px;color:#f27676;width:60px;text-align:center;transform:scaleX(0.87);transform-origin:center;">-183.06</div>
<div class="t" style="left:595.6px;top:517.20px;font-size:10px;color:#7480f2;width:60px;text-align:center;transform:scaleX(0.87);transform-origin:center;">2540</div>
<div class="t" style="left:595.6px;top:525.70px;font-size:10px;color:#7480f2;width:60px;text-align:center;transform:scaleX(0.87);transform-origin:center;">279%</div>
<div class="t" style="left:595.6px;top:544.00px;font-size:10px;color:#f27676;width:60px;text-align:center;transform:scaleX(0.87);transform-origin:center;">-4.69</div>
<div class="t" style="left:595.6px;top:571.50px;font-size:10px;color:#f27676;width:60px;text-align:center;transform:scaleX(0.87);transform-origin:center;">-0.01</div>
<div class="t" style="left:595.6px;top:608.30px;font-size:10px;color:#7480f2;width:60px;text-align:center;transform:scaleX(0.87);transform-origin:center;">41.86</div>
<div class="t" style="left:595.6px;top:626.50px;font-size:10px;color:#f27676;width:60px;text-align:center;transform:scaleX(0.87);transform-origin:center;">-163.27</div>
<div class="t" style="left:644.7px;top:517.20px;font-size:10px;color:#7480f2;width:60px;text-align:center;transform:scaleX(0.87);transform-origin:center;">2289</div>
<div class="t" style="left:644.7px;top:525.70px;font-size:10px;color:#7480f2;width:60px;text-align:center;transform:scaleX(0.87);transform-origin:center;">252%</div>
<div class="t" style="left:644.7px;top:544.00px;font-size:10px;color:#f27676;width:60px;text-align:center;transform:scaleX(0.87);transform-origin:center;">-5.32</div>
<div class="t" style="left:644.7px;top:571.50px;font-size:10px;color:#f27676;width:60px;text-align:center;transform:scaleX(0.87);transform-origin:center;">-0.01</div>
<div class="t" style="left:644.7px;top:608.30px;font-size:10px;color:#7480f2;width:60px;text-align:center;transform:scaleX(0.87);transform-origin:center;">38.97</div>
<div class="t" style="left:644.7px;top:626.50px;font-size:10px;color:#f27676;width:60px;text-align:center;transform:scaleX(0.87);transform-origin:center;">-138.19</div>
<div class="t" style="left:693.8px;top:517.20px;font-size:10px;color:#7480f2;width:60px;text-align:center;transform:scaleX(0.87);transform-origin:center;">2012</div>
<div class="t" style="left:693.8px;top:525.70px;font-size:10px;color:#7480f2;width:60px;text-align:center;transform:scaleX(0.87);transform-origin:center;">221%</div>
<div class="t" style="left:693.8px;top:544.00px;font-size:10px;color:#f27676;width:60px;text-align:center;transform:scaleX(0.87);transform-origin:center;">-5.74</div>
<div class="t" style="left:693.8px;top:571.50px;font-size:10px;color:#f27676;width:60px;text-align:center;transform:scaleX(0.87);transform-origin:center;">-0.01</div>
<div class="t" style="left:693.8px;top:608.30px;font-size:10px;color:#7480f2;width:60px;text-align:center;transform:scaleX(0.87);transform-origin:center;">34.94</div>
<div class="t" style="left:693.8px;top:626.50px;font-size:10px;color:#f27676;width:60px;text-align:center;transform:scaleX(0.87);transform-origin:center;">-109.76</div>
<div class="t" style="left:742.9px;top:517.20px;font-size:10px;color:#7480f2;width:60px;text-align:center;transform:scaleX(0.87);transform-origin:center;">1719</div>
<div class="t" style="left:742.9px;top:525.70px;font-size:10px;color:#7480f2;width:60px;text-align:center;transform:scaleX(0.87);transform-origin:center;">189%</div>
<div class="t" style="left:742.9px;top:544.00px;font-size:10px;color:#f27676;width:60px;text-align:center;transform:scaleX(0.87);transform-origin:center;">-5.95</div>
<div class="t" style="left:742.9px;top:581.00px;font-size:10px;color:#7480f2;width:60px;text-align:center;transform:scaleX(0.87);transform-origin:center;">0.00</div>
<div class="t" style="left:742.9px;top:608.30px;font-size:10px;color:#7480f2;width:60px;text-align:center;transform:scaleX(0.87);transform-origin:center;">30.14</div>
<div class="t" style="left:742.9px;top:626.50px;font-size:10px;color:#f27676;width:60px;text-align:center;transform:scaleX(0.87);transform-origin:center;">-79.97</div>
<div class="t" style="left:792.0px;top:517.20px;font-size:10px;color:#7480f2;width:60px;text-align:center;transform:scaleX(0.87);transform-origin:center;">1420</div>
<div class="t" style="left:792.0px;top:525.70px;font-size:10px;color:#7480f2;width:60px;text-align:center;transform:scaleX(0.87);transform-origin:center;">156%</div>
<div class="t" style="left:792.0px;top:544.00px;font-size:10px;color:#f27676;width:60px;text-align:center;transform:scaleX(0.87);transform-origin:center;">-5.97</div>
<div class="t" style="left:792.0px;top:581.00px;font-size:10px;color:#7480f2;width:60px;text-align:center;transform:scaleX(0.87);transform-origin:center;">0.00</div>
<div class="t" style="left:792.0px;top:608.30px;font-size:10px;color:#7480f2;width:60px;text-align:center;transform:scaleX(0.87);transform-origin:center;">24.95</div>
<div class="t" style="left:792.0px;top:626.50px;font-size:10px;color:#f27676;width:60px;text-align:center;transform:scaleX(0.87);transform-origin:center;">-50.68</div>
<div class="t" style="left:841.1px;top:517.20px;font-size:10px;color:#7480f2;width:60px;text-align:center;transform:scaleX(0.87);transform-origin:center;">1124</div>
<div class="t" style="left:841.1px;top:525.70px;font-size:10px;color:#7480f2;width:60px;text-align:center;transform:scaleX(0.87);transform-origin:center;">124%</div>
<div class="t" style="left:841.1px;top:544.00px;font-size:10px;color:#f27676;width:60px;text-align:center;transform:scaleX(0.87);transform-origin:center;">-5.82</div>
<div class="t" style="left:841.1px;top:581.00px;font-size:10px;color:#7480f2;width:60px;text-align:center;transform:scaleX(0.87);transform-origin:center;">0.00</div>
<div class="t" style="left:841.1px;top:608.30px;font-size:10px;color:#7480f2;width:60px;text-align:center;transform:scaleX(0.87);transform-origin:center;">19.72</div>
<div class="t" style="left:841.1px;top:626.50px;font-size:10px;color:#f27676;width:60px;text-align:center;transform:scaleX(0.87);transform-origin:center;">-23.48</div>
<div class="t" style="left:890.2px;top:517.20px;font-size:10px;color:#7480f2;width:60px;text-align:center;transform:scaleX(0.87);transform-origin:center;">840</div>
<div class="t" style="left:890.2px;top:525.70px;font-size:10px;color:#7480f2;width:60px;text-align:center;transform:scaleX(0.87);transform-origin:center;">92%</div>
<div class="t" style="left:890.2px;top:544.00px;font-size:10px;color:#f27676;width:60px;text-align:center;transform:scaleX(0.87);transform-origin:center;">-5.53</div>
<div class="t" style="left:890.2px;top:581.00px;font-size:10px;color:#7480f2;width:60px;text-align:center;transform:scaleX(0.87);transform-origin:center;">0.01</div>
<div class="t" style="left:890.2px;top:608.30px;font-size:10px;color:#7480f2;width:60px;text-align:center;transform:scaleX(0.87);transform-origin:center;">14.75</div>
<div class="t" style="left:890.2px;top:635.50px;font-size:10px;color:#7480f2;width:60px;text-align:center;transform:scaleX(0.87);transform-origin:center;">0.39</div>
<div class="t" style="left:939.3px;top:517.20px;font-size:10px;color:#7480f2;width:60px;text-align:center;transform:scaleX(0.87);transform-origin:center;">573</div>
<div class="t" style="left:939.3px;top:525.70px;font-size:10px;color:#7480f2;width:60px;text-align:center;transform:scaleX(0.87);transform-origin:center;">63%</div>
<div class="t" style="left:939.3px;top:544.00px;font-size:10px;color:#f27676;width:60px;text-align:center;transform:scaleX(0.87);transform-origin:center;">-5.12</div>
<div class="t" style="left:939.3px;top:581.00px;font-size:10px;color:#7480f2;width:60px;text-align:center;transform:scaleX(0.87);transform-origin:center;">0.01</div>
<div class="t" style="left:939.3px;top:608.30px;font-size:10px;color:#7480f2;width:60px;text-align:center;transform:scaleX(0.87);transform-origin:center;">10.25</div>
<div class="t" style="left:939.3px;top:635.50px;font-size:10px;color:#7480f2;width:60px;text-align:center;transform:scaleX(0.87);transform-origin:center;">20.14</div>
<div class="t" style="left:988.4px;top:517.20px;font-size:10px;color:#7480f2;width:60px;text-align:center;transform:scaleX(0.87);transform-origin:center;">329</div>
<div class="t" style="left:988.4px;top:525.70px;font-size:10px;color:#7480f2;width:60px;text-align:center;transform:scaleX(0.87);transform-origin:center;">36%</div>
<div class="t" style="left:988.4px;top:544.00px;font-size:10px;color:#f27676;width:60px;text-align:center;transform:scaleX(0.87);transform-origin:center;">-4.65</div>
<div class="t" style="left:988.4px;top:581.00px;font-size:10px;color:#7480f2;width:60px;text-align:center;transform:scaleX(0.87);transform-origin:center;">0.01</div>
<div class="t" style="left:988.4px;top:608.30px;font-size:10px;color:#7480f2;width:60px;text-align:center;transform:scaleX(0.87);transform-origin:center;">6.38</div>
<div class="t" style="left:988.4px;top:635.50px;font-size:10px;color:#7480f2;width:60px;text-align:center;transform:scaleX(0.87);transform-origin:center;">35.37</div>
<div class="t" style="left:1037.5px;top:517.20px;font-size:10px;color:#7480f2;width:60px;text-align:center;transform:scaleX(0.87);transform-origin:center;">109</div>
<div class="t" style="left:1037.5px;top:525.70px;font-size:10px;color:#7480f2;width:60px;text-align:center;transform:scaleX(0.87);transform-origin:center;">12%</div>
<div class="t" style="left:1037.5px;top:544.00px;font-size:10px;color:#f27676;width:60px;text-align:center;transform:scaleX(0.87);transform-origin:center;">-4.13</div>
<div class="t" style="left:1037.5px;top:581.00px;font-size:10px;color:#7480f2;width:60px;text-align:center;transform:scaleX(0.87);transform-origin:center;">0.01</div>
<div class="t" style="left:1037.5px;top:608.30px;font-size:10px;color:#7480f2;width:60px;text-align:center;transform:scaleX(0.87);transform-origin:center;">3.22</div>
<div class="t" style="left:1037.5px;top:635.50px;font-size:10px;color:#7480f2;width:60px;text-align:center;transform:scaleX(0.87);transform-origin:center;">46.05</div>
<div class="a" style="left:1073px;top:480px;width:20px;height:172px;background:rgba(232,238,247,0.9);border:1px solid #9aa4b4;border-radius:4px"></div>
<div class="a" style="left:519px;top:655px;width:561px;height:20px;background:#283753;"></div>
<div class="t" style="left:1043px;top:659.50px;font-size:12.5px;color:#e8ecf4;transform:scaleX(0.87);transform-origin:left;">320%</div>
<div class="a" style="left:1076px;top:665px;width:4px;height:1px;background:#e8ecf4;"></div>
</body></html>
